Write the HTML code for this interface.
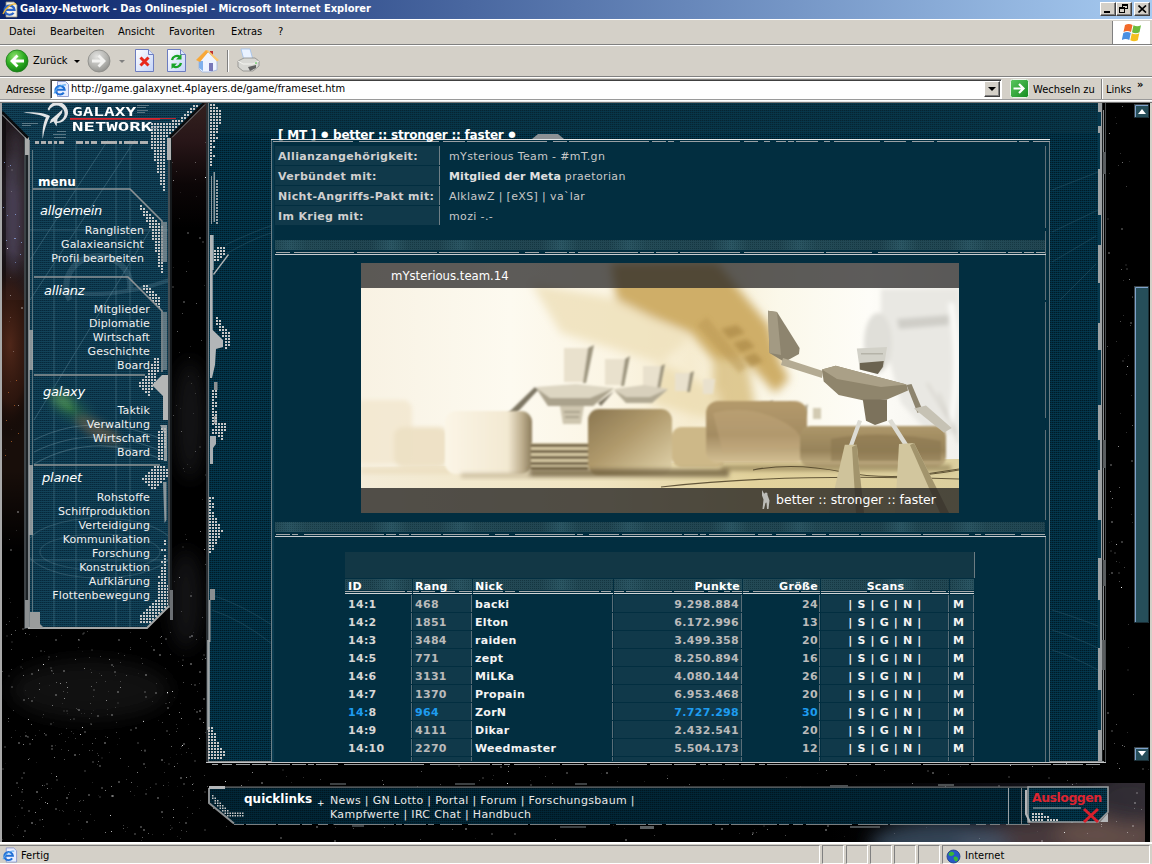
<!DOCTYPE html>
<html lang="de">
<head>
<meta charset="utf-8">
<title>Galaxy-Network - Das Onlinespiel</title>
<style>
html,body{margin:0;padding:0;}
body{width:1152px;height:864px;overflow:hidden;position:relative;background:#d4d0c8;font-family:"DejaVu Sans Condensed","Liberation Sans",sans-serif;font-size:11px;color:#000;}
.abs{position:absolute;}
/* ---------- browser chrome ---------- */
#titlebar{position:absolute;left:0;top:0;width:1152px;height:19px;background:linear-gradient(90deg,#0a246a 0%,#a6caf0 100%);}
#titletext{position:absolute;left:20px;top:1px;color:#fff;font-weight:bold;font-size:11px;line-height:16px;white-space:nowrap;font-family:"DejaVu Sans Condensed","Liberation Sans",sans-serif;letter-spacing:.025px;}
.tbtn{position:absolute;top:2px;width:16px;height:14px;background:#d4d0c8;box-sizing:border-box;border:1px solid;border-color:#fff #404040 #404040 #fff;box-shadow:inset -1px -1px 0 #808080;}
#menubar{position:absolute;left:0;top:19px;width:1152px;height:25px;background:#d4d0c8;border-top:1px solid #fff;box-sizing:border-box;}
.menuitem{position:absolute;top:5px;font-size:11px;line-height:14px;white-space:nowrap;}
#toolbar{position:absolute;left:0;top:44px;width:1152px;height:32px;background:#d4d0c8;border-top:1px solid #808080;box-sizing:border-box;box-shadow:inset 0 1px 0 #fff;}
#addrbar{position:absolute;left:0;top:76px;width:1152px;height:25px;background:#d4d0c8;border-top:1px solid #808080;box-sizing:border-box;box-shadow:inset 0 1px 0 #fff;}
#addrinput{position:absolute;left:50px;top:2px;width:952px;height:20px;background:#fff;box-sizing:border-box;border:1px solid;border-color:#808080 #fff #fff #808080;box-shadow:inset 1px 1px 0 #404040;}
#statusbar{position:absolute;left:0;top:842px;width:1152px;height:22px;background:#d4d0c8;box-sizing:border-box;box-shadow:inset 0 2px 0 #fff;}
.spane{position:absolute;top:3px;height:19px;box-sizing:border-box;border:1px solid;border-color:#808080 #fff #fff #808080;}
/* ---------- page ---------- */
#page{position:absolute;left:0;top:0;width:1152px;height:864px;background:#000;overflow:hidden;clip-path:inset(103px 2px 22px 2px);color:#e6e6e6;font-family:"DejaVu Sans","Liberation Sans",sans-serif;font-size:11px;}
#page svg{position:absolute;left:0;top:0;}
#viewborder{position:absolute;left:0;top:101px;width:1152px;height:743px;box-sizing:border-box;border:2px solid;border-color:#404040 #d4d0c8 #d4d0c8 #a8a8a8;border-top:0;pointer-events:none;}
#viewtop{position:absolute;left:0;top:99px;width:1152px;height:4px;background:linear-gradient(#9a9a9a 0 1px,#fff 1px 2px,#e4e4e4 2px 3px,#747474 3px 4px);}
.v{font-family:"DejaVu Sans","Liberation Sans",sans-serif;}
</style>
</head>
<body>

<!-- ======= TITLE BAR ======= -->
<div id="titlebar">
  <svg class="abs" style="left:2px;top:1px" width="17" height="17" viewBox="0 0 17 17">
    <path d="M4 1h8l3 3v12H4z" fill="#f4f1e6" stroke="#8c8a7e" stroke-width=".8"/>
    <path d="M11.600 11.800A5 4.600 0 1 1 12.500 8.800H3.500" fill="none" stroke="#2a64c8" stroke-width="2.200"/>
    <path d="M1 13c2-6 9-11 13-10" fill="none" stroke="#e8b030" stroke-width="1.3"/>
  </svg>
  <div id="titletext">Galaxy-Network - Das Onlinespiel - Microsoft Internet Explorer</div>
  <div class="tbtn" style="left:1100px"><div class="abs" style="left:3px;top:8px;width:6px;height:2px;background:#000"></div></div>
  <div class="tbtn" style="left:1116px">
    <div class="abs" style="left:5px;top:1px;width:6px;height:5px;border:1px solid #000;border-top-width:2px;box-sizing:border-box"></div>
    <div class="abs" style="left:2px;top:4px;width:6px;height:6px;border:1px solid #000;border-top-width:2px;box-sizing:border-box;background:#d4d0c8"></div>
  </div>
  <div class="tbtn" style="left:1134px">
    <svg class="abs" style="left:3px;top:2px" width="9" height="8" viewBox="0 0 9 8"><path d="M0.5 0.5l7.5 7M8 0.5l-7.5 7" stroke="#000" stroke-width="1.7" fill="none"/></svg>
  </div>
</div>

<!-- ======= MENU BAR ======= -->
<div id="menubar">
  <span class="menuitem" style="left:9px">Datei</span>
  <span class="menuitem" style="left:50px">Bearbeiten</span>
  <span class="menuitem" style="left:118px">Ansicht</span>
  <span class="menuitem" style="left:169px">Favoriten</span>
  <span class="menuitem" style="left:231px">Extras</span>
  <span class="menuitem" style="left:278px">?</span>
  <div class="abs" style="left:1112px;top:1px;width:38px;height:23px;background:#fff;border-left:1px solid #808080;box-sizing:border-box;">
    <svg class="abs" style="left:9px;top:2px" width="22" height="19" viewBox="0 0 22 19">
      <path d="M3 2c2.5-1.2 5-1.2 7.5 0l-1.5 7c-2.500-1.200-5-1.200-7.500 0z" fill="#f26a2a"/>
      <path d="M11.500 2.300c2.500 1.200 5 1.200 7.500 0l-1.500 7c-2.500 1.200-5 1.200-7.500 0z" fill="#6cbb3c"/>
      <path d="M1.300 10c2.500-1.200 5-1.200 7.500 0l-1.500 7c-2.500-1.200-5-1.200-7.500 0z" fill="#4a90e2"/>
      <path d="M9.800 10.300c2.500 1.200 5 1.200 7.500 0l-1.500 7c-2.500 1.200-5 1.200-7.500 0z" fill="#f4c020"/>
    </svg>
  </div>
</div>

<!-- ======= TOOLBAR ======= -->
<div id="toolbar">
  <!-- back -->
  <svg class="abs" style="left:5px;top:4px" width="24" height="24" viewBox="0 0 24 24">
    <defs>
      <radialGradient id="gback" cx="40%" cy="30%" r="75%"><stop offset="0" stop-color="#8fe070"/><stop offset=".55" stop-color="#2fae22"/><stop offset="1" stop-color="#0f7a10"/></radialGradient>
      <radialGradient id="gfwd" cx="40%" cy="30%" r="75%"><stop offset="0" stop-color="#e2e2e0"/><stop offset=".6" stop-color="#b4b4b0"/><stop offset="1" stop-color="#8e8e8a"/></radialGradient>
    </defs>
    <circle cx="12" cy="12" r="11" fill="url(#gback)" stroke="#1c7a18" stroke-width=".8"/>
    <path d="M5 12l6.500-6.500 2 2L10.500 10.500H19v3h-8.500l3 3-2 2z" fill="#fff"/>
  </svg>
  <span class="abs" style="left:33px;top:9px;line-height:14px">Zurück</span>
  <div class="abs" style="left:74px;top:15px;width:0;height:0;border:3px solid transparent;border-top:3px solid #000;border-bottom:0"></div>
  <!-- forward -->
  <svg class="abs" style="left:87px;top:4px" width="24" height="24" viewBox="0 0 24 24">
    <circle cx="12" cy="12" r="11" fill="url(#gfwd)" stroke="#8a8a86" stroke-width=".8"/>
    <path d="M19 12l-6.500-6.500-2 2 3 3H5v3h8.500l-3 3 2 2z" fill="#f2f2f0"/>
  </svg>
  <div class="abs" style="left:119px;top:15px;width:0;height:0;border:3px solid transparent;border-top:3px solid #808080;border-bottom:0"></div>
  <!-- stop -->
  <svg class="abs" style="left:134px;top:3px" width="22" height="25" viewBox="0 0 22 25">
    <defs><linearGradient id="gpage" x1="0" y1="0" x2="1" y2="1"><stop offset="0" stop-color="#ffffff"/><stop offset="1" stop-color="#c4d4f8"/></linearGradient></defs>
    <path d="M1.500 1.500h13l5 5v17h-18z" fill="url(#gpage)" stroke="#6c7cc0" stroke-width="1"/>
    <path d="M14.500 1.500v5h5" fill="#dce6fc" stroke="#6c7cc0" stroke-width="1"/>
    <path d="M6.500 9.500l8 8M14.500 9.500l-8 8" stroke="#e8281c" stroke-width="3" fill="none"/>
  </svg>
  <!-- refresh -->
  <svg class="abs" style="left:166px;top:3px" width="22" height="25" viewBox="0 0 22 25">
    <path d="M1.500 1.500h13l5 5v17h-18z" fill="url(#gpage)" stroke="#6c7cc0" stroke-width="1"/>
    <path d="M14.500 1.500v5h5" fill="#dce6fc" stroke="#6c7cc0" stroke-width="1"/>
    <path d="M6 12a5 5 0 0 1 8-3" stroke="#18a428" stroke-width="2.400" fill="none"/>
    <path d="M15.500 6v5.500H10z" fill="#18a428"/>
    <path d="M15 15a5 5 0 0 1-8 3" stroke="#18a428" stroke-width="2.400" fill="none"/>
    <path d="M5.500 21v-5.500H11z" fill="#18a428"/>
  </svg>
  <!-- home -->
  <svg class="abs" style="left:195px;top:3px" width="26" height="25" viewBox="0 0 26 25">
    <path d="M15 3h3v5h-3z" fill="#c03030"/>
    <path d="M4 13l9-9 9 8v10l-7 2H7l-3-3z" fill="#eef4ff" stroke="#9fb4dc" stroke-width=".8"/>
    <path d="M4 13v7l4 3V13z" fill="#7fb0ec"/>
    <path d="M1 12L11 2l3 1L5 14z" fill="#f8a838"/>
    <path d="M11 2l3 1 10 9-2 1.500z" fill="#fbc870"/>
    <path d="M14 15h4v8h-4z" fill="#7878b8"/>
  </svg>
  <div class="abs" style="left:227px;top:5px;width:1px;height:22px;background:#808080;border-right:1px solid #fff"></div>
  <!-- print -->
  <svg class="abs" style="left:236px;top:3px" width="25" height="25" viewBox="0 0 25 25">
    <path d="M5 1h9l3 11H8z" fill="#eaf2ff" stroke="#9fc0ec" stroke-width=".8"/>
    <path d="M2 13l6-3h11l4 3v5l-6 5H7l-5-4z" fill="#d8d8d4" stroke="#8c8c88" stroke-width=".8"/>
    <path d="M2 13l5 3h10l6-3" fill="none" stroke="#f4f4f0" stroke-width="1"/>
    <path d="M12 19l8-2v3l-6 3z" fill="#606060"/>
    <circle cx="20" cy="15" r=".8" fill="#30c030"/>
  </svg>
</div>

<!-- ======= ADDRESS BAR ======= -->
<div id="addrbar">
  <span class="abs" style="left:6px;top:6px;line-height:14px">Adresse</span>
  <div id="addrinput">
    <svg class="abs" style="left:2px;top:1px" width="17" height="16" viewBox="0 0 17 16">
      <path d="M4.500 .5h8l3 3v12h-11z" fill="#e8eeff" stroke="#7c8cc8" stroke-width=".8"/>
      <path d="M10.800 11.600A4.600 4.300 0 1 1 11.600 8.800H3.500" fill="none" stroke="#1f6fd6" stroke-width="2.100"/>
      <path d="M1 12.500c2-5.500 8-9.500 12-8.500" fill="none" stroke="#58a8f0" stroke-width="1.100"/>
    </svg>
    <span class="abs" style="left:20px;top:2px;line-height:14px;white-space:nowrap">http://game.galaxynet.4players.de/game/frameset.htm</span>
    <div class="abs" style="right:1px;top:1px;width:16px;height:16px;background:#d4d0c8;box-sizing:border-box;border:1px solid;border-color:#fff #404040 #404040 #fff;box-shadow:inset -1px -1px 0 #808080">
      <div class="abs" style="left:3px;top:5px;width:0;height:0;border:4px solid transparent;border-top:4px solid #000;border-bottom:0"></div>
    </div>
  </div>
  <svg class="abs" style="left:1010px;top:2px" width="19" height="19" viewBox="0 0 19 19">
    <defs><linearGradient id="ggo" x1="0" y1="0" x2="1" y2="1"><stop offset="0" stop-color="#5cc860"/><stop offset="1" stop-color="#148c20"/></linearGradient></defs>
    <rect x=".5" y=".5" width="18" height="18" rx="2" fill="url(#ggo)" stroke="#e8f4e8" stroke-width="1"/>
    <path d="M3.500 9.500h9M9 5l4.500 4.500L9 14" stroke="#fff" stroke-width="2.200" fill="none"/>
  </svg>
  <span class="abs" style="left:1033px;top:6px;line-height:14px;white-space:nowrap">Wechseln zu</span>
  <div class="abs" style="left:1101px;top:2px;width:1px;height:20px;background:#808080;border-right:1px solid #fff"></div>
  <span class="abs" style="left:1106px;top:6px;line-height:14px">Links</span>
  <span class="abs" style="left:1137px;top:1px;line-height:14px;font-size:11px;font-weight:bold;letter-spacing:-1px">»</span>
</div>

<!-- ======= PAGE ======= -->

<style>
.mi{position:absolute;font-size:11px;line-height:14px;color:#f0f0f0;white-space:nowrap;letter-spacing:.12px;}
.mc{position:absolute;font-style:italic;font-size:13px;line-height:16px;color:#fff;white-space:nowrap;letter-spacing:-.2px;}
.lg{font-family:"DejaVu Sans Mono","Liberation Mono",monospace;font-weight:bold;font-size:12.5px;line-height:13px;color:#fff;letter-spacing:0;transform-origin:0 0;white-space:nowrap;}
.il{position:absolute;left:275px;width:165px;height:19px;background:#10394a;box-sizing:border-box;padding:4px 0 0 3px;font-weight:bold;color:#d0d0d0;white-space:nowrap;letter-spacing:.36px;line-height:13px;border-right:1px solid #6f7f86;}
.iv{position:absolute;left:441px;width:604px;height:19px;box-sizing:border-box;padding:4px 0 0 8px;color:#c8c8c8;white-space:nowrap;letter-spacing:.36px;line-height:13px;}
.iv b{color:#e0e0e0;letter-spacing:.1px;}
.th{position:absolute;height:14px;box-sizing:border-box;font-weight:bold;color:#fff;line-height:13px;padding:0 2px 0 3px;white-space:nowrap;letter-spacing:.3px;}
.td{position:absolute;height:17px;box-sizing:border-box;font-weight:bold;color:#bababa;line-height:13px;padding:3px 2px 0 3px;white-space:nowrap;letter-spacing:.3px;border-right:1px solid #5a6e78;word-spacing:.7px;}
.td.alt{background:#10394a;}
.td.w{color:#f4f4f4;}
.td.idc{color:#d6d6d6;}
.td.me,.mec{color:#1e9cf0;}
.bl{display:inline-block;width:9px;text-align:center;font-size:8.500px;vertical-align:1.500px;letter-spacing:0;}
.r{text-align:right;}.c{text-align:center;}.l{text-align:left;}
.ql{font-size:11px;line-height:14px;color:#e8e8e8;white-space:nowrap;letter-spacing:.32px;}
</style>

<div id="page">
<svg width="1152" height="864" viewBox="0 0 1152 864">

<defs>
  <pattern id="grid" width="2" height="2" patternUnits="userSpaceOnUse"><rect width="2" height="2" fill="#04384e"/><rect width="1" height="1" fill="#001a26"/><rect x="1" width="1" height="1" fill="#022c3c"/><rect y="1" width="1" height="1" fill="#03334a"/></pattern>
  <pattern id="grid3" width="3" height="3" patternUnits="userSpaceOnUse"><rect width="3" height="3" fill="#0d3f54"/><rect width="2" height="2" fill="#012a3b"/></pattern>
  <pattern id="band" width="2" height="2" patternUnits="userSpaceOnUse"><rect width="2" height="2" fill="#2b515d"/><rect width="1" height="1" fill="#12303a"/></pattern>
  <linearGradient id="bandg" x1="0" x2="170" y1="0" y2="0" gradientUnits="userSpaceOnUse" spreadMethod="repeat">
    <stop offset="0" stop-color="#193e4a"/><stop offset=".18" stop-color="#173a46"/><stop offset=".3" stop-color="#2c5d6c"/><stop offset=".4" stop-color="#1a404c"/><stop offset=".58" stop-color="#183c48"/><stop offset=".7" stop-color="#2a5968"/><stop offset=".8" stop-color="#1c4450"/><stop offset="1" stop-color="#193e4a"/>
  </linearGradient>
  <radialGradient id="neb1" cx="50%" cy="50%" r="50%"><stop offset="0" stop-color="#52281a" stop-opacity=".95"/><stop offset=".6" stop-color="#34180f" stop-opacity=".7"/><stop offset="1" stop-color="#000" stop-opacity="0"/></radialGradient>
  <linearGradient id="fadeb" x1="0" x2="0" y1="0" y2="1"><stop offset="0" stop-color="#000" stop-opacity="0"/><stop offset=".75" stop-color="#000" stop-opacity="1"/><stop offset="1" stop-color="#000" stop-opacity="1"/></linearGradient>
  <linearGradient id="nebfade" x1="0" x2="1" y1="0" y2="0"><stop offset="0" stop-color="#0a0a0e" stop-opacity="0"/><stop offset=".5" stop-color="#0e0e14" stop-opacity=".9"/><stop offset=".85" stop-color="#1a181e" stop-opacity="1"/><stop offset="1" stop-color="#2a2428" stop-opacity="1"/></linearGradient>
  <linearGradient id="gapg" x1="0" x2="0" y1="0" y2="1"><stop offset="0" stop-color="#33211f"/><stop offset=".3" stop-color="#281618"/><stop offset=".65" stop-color="#0c0607"/><stop offset="1" stop-color="#000"/></linearGradient>
  <linearGradient id="leftg" x1="0" x2="0" y1="0" y2="1"><stop offset="0" stop-color="#1a1418"/><stop offset=".25" stop-color="#30262c"/><stop offset=".6" stop-color="#2c2024"/><stop offset="1" stop-color="#2a1812"/></linearGradient>
  <filter id="nblur" x="-20%" y="-50%" width="140%" height="200%"><feGaussianBlur stdDeviation="9"/></filter>
  <filter id="nblur2" x="-100%" y="-30%" width="300%" height="160%"><feGaussianBlur stdDeviation="4"/></filter>
  <radialGradient id="neb2" cx="50%" cy="50%" r="50%"><stop offset="0" stop-color="#3a1c1a" stop-opacity=".9"/><stop offset="1" stop-color="#000" stop-opacity="0"/></radialGradient>
  <radialGradient id="neb3" cx="50%" cy="50%" r="50%"><stop offset="0" stop-color="#4a4048" stop-opacity=".9"/><stop offset=".5" stop-color="#2c2830" stop-opacity=".7"/><stop offset="1" stop-color="#000" stop-opacity="0"/></radialGradient>
  <radialGradient id="neb4" cx="50%" cy="50%" r="50%"><stop offset="0" stop-color="#4a6a90" stop-opacity=".55"/><stop offset="1" stop-color="#000" stop-opacity="0"/></radialGradient>
</defs>


<g id="bg">
  <rect x="0" y="0" width="1152" height="864" fill="#000"/>
  <!-- nebula left of menu -->
  <rect x="2" y="103" width="26" height="330" fill="url(#leftg)"/>
  <g filter="url(#nblur2)"><ellipse cx="13" cy="215" rx="8" ry="62" fill="#4c465c" opacity=".8"/><ellipse cx="16" cy="160" rx="6" ry="30" fill="#3a3440" opacity=".7"/></g>
  <rect x="2" y="103" width="4" height="330" fill="#000" opacity=".45"/>
  <g fill="#8aa0d8" opacity=".8"><rect x="10" y="165" width="1" height="1"/><rect x="4" y="162" width="1" height="1"/><rect x="7" y="215" width="1" height="1"/><rect x="15" y="214" width="1" height="1"/><rect x="19" y="226" width="1" height="1"/><rect x="14" y="238" width="2" height="1"/><rect x="6" y="240" width="1" height="1"/><rect x="21" y="242" width="1" height="1"/><rect x="15" y="262" width="1" height="1"/><rect x="20" y="254" width="1" height="1"/><rect x="3" y="207" width="1" height="1"/></g>
  <rect x="2" y="300" width="26" height="280" fill="#180e0a"/>
  <ellipse cx="10" cy="345" rx="30" ry="95" fill="url(#neb1)"/>
  <rect x="2" y="470" width="26" height="110" fill="url(#fadeb)"/>
  <g fill="#e07830" opacity=".6"><rect x="8" y="392" width="1" height="1"/><rect x="14" y="405" width="1" height="1"/><rect x="6" y="420" width="1" height="1"/><rect x="18" y="433" width="1" height="1"/><rect x="11" y="441" width="1" height="1"/><rect x="16" y="380" width="1" height="1"/><rect x="5" y="455" width="1" height="1"/></g>
  <!-- faint haze in gap -->
  <g filter="url(#nblur)" opacity=".5"><ellipse cx="190" cy="420" rx="14" ry="60" fill="#2a2a2e"/><ellipse cx="186" cy="600" rx="16" ry="50" fill="#26262a"/><ellipse cx="90" cy="690" rx="80" ry="30" fill="#202024"/></g>
  <!-- nebula between menu and main -->
  <rect x="170" y="103" width="36" height="125" fill="url(#gapg)"/>
  <!-- nebula bottom right -->
  <g>
    <clipPath id="nebclip"><rect x="830" y="783" width="315" height="60"/></clipPath>
    <g clip-path="url(#nebclip)">
      <rect x="830" y="783" width="315" height="60" fill="url(#nebfade)"/>
      <g filter="url(#nblur)">
        <ellipse cx="1075" cy="842" rx="120" ry="26" fill="#4c3e40" opacity=".9"/>
        <ellipse cx="1105" cy="832" rx="50" ry="18" fill="#6a544e" opacity=".8"/>
        <ellipse cx="940" cy="845" rx="70" ry="24" fill="#41566e" opacity=".75"/>
        <ellipse cx="1130" cy="800" rx="36" ry="26" fill="#34303a" opacity=".8"/>
        
      </g>
    </g>
  </g>
  <rect x="51" y="745" width="2" height="2" fill="#fff" opacity="0.21"/><rect x="120" y="758" width="1" height="1" fill="#fff" opacity="0.42"/><rect x="114" y="671" width="2" height="2" fill="#fff" opacity="0.20"/><rect x="99" y="765" width="2" height="2" fill="#fff" opacity="0.22"/><rect x="82" y="633" width="2" height="2" fill="#fff" opacity="0.12"/><rect x="11" y="795" width="1" height="1" fill="#fff" opacity="0.37"/><rect x="123" y="825" width="1" height="1" fill="#fff" opacity="0.25"/><rect x="83" y="800" width="1" height="1" fill="#fff" opacity="0.29"/><rect x="22" y="659" width="1" height="1" fill="#fff" opacity="0.29"/><rect x="161" y="811" width="2" height="2" fill="#fff" opacity="0.26"/><rect x="74" y="754" width="2" height="2" fill="#fff" opacity="0.28"/><rect x="189" y="636" width="2" height="2" fill="#fff" opacity="0.21"/><rect x="35" y="812" width="1" height="1" fill="#fff" opacity="0.53"/><rect x="118" y="781" width="2" height="2" fill="#fff" opacity="0.26"/><rect x="56" y="656" width="1" height="1" fill="#fff" opacity="0.22"/><rect x="20" y="800" width="1" height="1" fill="#fff" opacity="0.11"/><rect x="89" y="718" width="1" height="1" fill="#fff" opacity="0.21"/><rect x="79" y="754" width="1" height="1" fill="#fff" opacity="0.28"/><rect x="105" y="842" width="2" height="2" fill="#fff" opacity="0.10"/><rect x="111" y="831" width="1" height="1" fill="#fff" opacity="0.70"/><rect x="56" y="776" width="1" height="1" fill="#fff" opacity="0.72"/><rect x="75" y="659" width="1" height="1" fill="#fff" opacity="0.39"/><rect x="179" y="712" width="1" height="1" fill="#fff" opacity="0.47"/><rect x="23" y="836" width="1" height="1" fill="#fff" opacity="0.37"/><rect x="131" y="782" width="1" height="1" fill="#fff" opacity="0.41"/><rect x="55" y="694" width="2" height="2" fill="#fff" opacity="0.25"/><rect x="66" y="710" width="2" height="2" fill="#fff" opacity="0.11"/><rect x="130" y="729" width="2" height="2" fill="#fff" opacity="0.16"/><rect x="59" y="734" width="1" height="1" fill="#fff" opacity="0.29"/><rect x="199" y="683" width="1" height="1" fill="#fff" opacity="0.21"/><rect x="38" y="669" width="1" height="1" fill="#fff" opacity="0.27"/><rect x="63" y="710" width="2" height="2" fill="#fff" opacity="0.09"/><rect x="141" y="658" width="1" height="1" fill="#fff" opacity="0.22"/><rect x="51" y="670" width="1" height="1" fill="#fff" opacity="0.23"/><rect x="125" y="831" width="1" height="1" fill="#fff" opacity="0.13"/><rect x="18" y="787" width="1" height="1" fill="#fff" opacity="0.21"/><rect x="48" y="656" width="2" height="2" fill="#fff" opacity="0.12"/><rect x="39" y="689" width="1" height="1" fill="#fff" opacity="0.46"/><rect x="166" y="703" width="1" height="1" fill="#fff" opacity="0.14"/><rect x="97" y="764" width="1" height="1" fill="#fff" opacity="0.21"/><rect x="190" y="663" width="2" height="2" fill="#fff" opacity="0.29"/><rect x="203" y="722" width="1" height="1" fill="#fff" opacity="0.53"/><rect x="47" y="788" width="1" height="1" fill="#fff" opacity="0.47"/><rect x="108" y="691" width="1" height="1" fill="#fff" opacity="0.13"/><rect x="177" y="836" width="1" height="1" fill="#fff" opacity="0.13"/><rect x="186" y="777" width="1" height="1" fill="#fff" opacity="0.52"/><rect x="186" y="752" width="1" height="1" fill="#fff" opacity="0.24"/><rect x="105" y="681" width="1" height="1" fill="#fff" opacity="0.20"/><rect x="194" y="760" width="2" height="2" fill="#fff" opacity="0.14"/><rect x="99" y="796" width="2" height="2" fill="#fff" opacity="0.12"/><rect x="183" y="655" width="1" height="1" fill="#fff" opacity="0.14"/><rect x="170" y="632" width="1" height="1" fill="#fff" opacity="0.27"/><rect x="156" y="683" width="1" height="1" fill="#fff" opacity="0.19"/><rect x="98" y="795" width="1" height="1" fill="#fff" opacity="0.09"/><rect x="11" y="641" width="2" height="2" fill="#fff" opacity="0.09"/><rect x="20" y="736" width="1" height="1" fill="#fff" opacity="0.15"/><rect x="81" y="713" width="1" height="1" fill="#fff" opacity="0.14"/><rect x="89" y="657" width="1" height="1" fill="#fff" opacity="0.24"/><rect x="118" y="639" width="2" height="2" fill="#fff" opacity="0.22"/><rect x="80" y="800" width="1" height="1" fill="#fff" opacity="0.17"/><rect x="130" y="791" width="1" height="1" fill="#fff" opacity="0.29"/><rect x="96" y="682" width="1" height="1" fill="#fff" opacity="0.23"/><rect x="166" y="678" width="1" height="1" fill="#fff" opacity="0.09"/><rect x="78" y="820" width="1" height="1" fill="#fff" opacity="0.14"/><rect x="143" y="829" width="2" height="2" fill="#fff" opacity="0.27"/><rect x="164" y="772" width="1" height="1" fill="#fff" opacity="0.20"/><rect x="168" y="782" width="1" height="1" fill="#fff" opacity="0.13"/><rect x="11" y="649" width="1" height="1" fill="#fff" opacity="0.27"/><rect x="169" y="702" width="1" height="1" fill="#fff" opacity="0.31"/><rect x="25" y="732" width="1" height="1" fill="#fff" opacity="0.14"/><rect x="165" y="638" width="2" height="2" fill="#fff" opacity="0.19"/><rect x="51" y="748" width="2" height="2" fill="#fff" opacity="0.20"/><rect x="68" y="750" width="1" height="1" fill="#fff" opacity="0.36"/><rect x="39" y="683" width="1" height="1" fill="#fff" opacity="0.25"/><rect x="54" y="757" width="1" height="1" fill="#fff" opacity="0.44"/><rect x="199" y="710" width="2" height="2" fill="#fff" opacity="0.28"/><rect x="199" y="718" width="2" height="2" fill="#fff" opacity="0.21"/><rect x="142" y="663" width="1" height="1" fill="#fff" opacity="0.28"/><rect x="22" y="789" width="1" height="1" fill="#fff" opacity="0.43"/><rect x="92" y="782" width="1" height="1" fill="#fff" opacity="0.14"/><rect x="32" y="739" width="1" height="1" fill="#fff" opacity="0.51"/><rect x="112" y="795" width="2" height="2" fill="#fff" opacity="0.27"/><rect x="176" y="754" width="1" height="1" fill="#fff" opacity="0.13"/><rect x="57" y="800" width="1" height="1" fill="#fff" opacity="0.21"/><rect x="68" y="794" width="1" height="1" fill="#fff" opacity="0.30"/><rect x="145" y="674" width="2" height="2" fill="#fff" opacity="0.28"/><rect x="116" y="732" width="1" height="1" fill="#fff" opacity="0.27"/><rect x="162" y="817" width="1" height="1" fill="#fff" opacity="0.28"/><rect x="134" y="795" width="1" height="1" fill="#fff" opacity="0.13"/><rect x="51" y="670" width="2" height="2" fill="#fff" opacity="0.12"/><rect x="140" y="638" width="1" height="1" fill="#fff" opacity="0.34"/><rect x="11" y="669" width="1" height="1" fill="#fff" opacity="0.26"/><rect x="21" y="807" width="2" height="2" fill="#fff" opacity="0.16"/><rect x="152" y="701" width="1" height="1" fill="#fff" opacity="0.15"/><rect x="101" y="675" width="1" height="1" fill="#fff" opacity="0.29"/><rect x="28" y="698" width="1" height="1" fill="#fff" opacity="0.32"/><rect x="90" y="723" width="2" height="2" fill="#fff" opacity="0.14"/><rect x="194" y="709" width="1" height="1" fill="#fff" opacity="0.25"/><rect x="137" y="772" width="1" height="1" fill="#fff" opacity="0.50"/><rect x="24" y="830" width="2" height="2" fill="#fff" opacity="0.20"/><rect x="25" y="735" width="2" height="2" fill="#fff" opacity="0.24"/><rect x="150" y="787" width="1" height="1" fill="#fff" opacity="0.24"/><rect x="39" y="819" width="2" height="2" fill="#fff" opacity="0.11"/><rect x="31" y="700" width="2" height="2" fill="#fff" opacity="0.21"/><rect x="63" y="670" width="2" height="2" fill="#fff" opacity="0.25"/><rect x="16" y="782" width="2" height="2" fill="#fff" opacity="0.20"/><rect x="82" y="651" width="1" height="1" fill="#fff" opacity="0.09"/><rect x="11" y="737" width="1" height="1" fill="#fff" opacity="0.25"/><rect x="181" y="830" width="1" height="1" fill="#fff" opacity="0.26"/><rect x="74" y="810" width="1" height="1" fill="#fff" opacity="0.14"/><rect x="141" y="750" width="1" height="1" fill="#fff" opacity="0.33"/><rect x="144" y="750" width="2" height="2" fill="#fff" opacity="0.17"/><rect x="28" y="759" width="1" height="1" fill="#fff" opacity="0.50"/><rect x="113" y="666" width="1" height="1" fill="#fff" opacity="0.27"/><rect x="161" y="636" width="1" height="1" fill="#fff" opacity="0.52"/><rect x="196" y="711" width="2" height="2" fill="#fff" opacity="0.21"/><rect x="104" y="742" width="2" height="2" fill="#fff" opacity="0.28"/><rect x="101" y="757" width="2" height="2" fill="#fff" opacity="0.08"/><rect x="50" y="667" width="2" height="2" fill="#fff" opacity="0.12"/><rect x="45" y="802" width="1" height="1" fill="#fff" opacity="0.54"/><rect x="25" y="690" width="1" height="1" fill="#fff" opacity="0.11"/><rect x="164" y="762" width="1" height="1" fill="#fff" opacity="0.16"/><rect x="105" y="736" width="1" height="1" fill="#fff" opacity="0.15"/><rect x="180" y="777" width="2" height="2" fill="#fff" opacity="0.27"/><rect x="160" y="637" width="1" height="1" fill="#fff" opacity="0.30"/><rect x="192" y="813" width="1" height="1" fill="#fff" opacity="0.25"/><rect x="66" y="797" width="2" height="2" fill="#fff" opacity="0.27"/><rect x="35" y="735" width="1" height="1" fill="#fff" opacity="0.20"/><rect x="45" y="734" width="2" height="2" fill="#fff" opacity="0.18"/><rect x="84" y="668" width="1" height="1" fill="#fff" opacity="0.48"/><rect x="77" y="709" width="1" height="1" fill="#fff" opacity="0.21"/><rect x="200" y="800" width="1" height="1" fill="#fff" opacity="0.16"/><rect x="111" y="664" width="2" height="2" fill="#fff" opacity="0.21"/><rect x="36" y="636" width="1" height="1" fill="#fff" opacity="0.12"/><rect x="40" y="808" width="1" height="1" fill="#fff" opacity="0.15"/><rect x="146" y="641" width="1" height="1" fill="#fff" opacity="0.17"/><rect x="187" y="817" width="1" height="1" fill="#fff" opacity="0.17"/><rect x="36" y="762" width="1" height="1" fill="#fff" opacity="0.11"/><rect x="167" y="692" width="1" height="1" fill="#fff" opacity="0.93"/><rect x="163" y="834" width="1" height="1" fill="#fff" opacity="0.20"/><rect x="168" y="763" width="2" height="2" fill="#fff" opacity="0.10"/><rect x="91" y="649" width="2" height="2" fill="#fff" opacity="0.10"/><rect x="20" y="666" width="2" height="2" fill="#fff" opacity="0.09"/><rect x="106" y="700" width="1" height="1" fill="#fff" opacity="0.49"/><rect x="71" y="731" width="1" height="1" fill="#fff" opacity="0.22"/><rect x="64" y="759" width="1" height="1" fill="#fff" opacity="0.32"/><rect x="62" y="810" width="1" height="1" fill="#fff" opacity="0.17"/><rect x="111" y="795" width="2" height="2" fill="#fff" opacity="0.26"/><rect x="81" y="829" width="1" height="1" fill="#fff" opacity="0.12"/><rect x="91" y="724" width="1" height="1" fill="#fff" opacity="0.16"/><rect x="105" y="790" width="1" height="1" fill="#fff" opacity="0.47"/><rect x="196" y="639" width="1" height="1" fill="#fff" opacity="0.25"/><rect x="21" y="777" width="2" height="2" fill="#fff" opacity="0.15"/><rect x="174" y="766" width="1" height="1" fill="#fff" opacity="0.52"/><rect x="94" y="820" width="1" height="1" fill="#fff" opacity="0.15"/><rect x="2" y="671" width="1" height="1" fill="#fff" opacity="0.28"/><rect x="118" y="653" width="1" height="1" fill="#fff" opacity="0.22"/><rect x="142" y="837" width="1" height="1" fill="#fff" opacity="0.34"/><rect x="203" y="654" width="2" height="2" fill="#fff" opacity="0.13"/><rect x="107" y="737" width="1" height="1" fill="#fff" opacity="0.38"/><rect x="182" y="796" width="1" height="1" fill="#fff" opacity="0.22"/><rect x="170" y="654" width="1" height="1" fill="#fff" opacity="0.29"/><rect x="194" y="684" width="2" height="2" fill="#fff" opacity="0.17"/><rect x="128" y="766" width="1" height="1" fill="#fff" opacity="0.27"/><rect x="84" y="770" width="2" height="2" fill="#fff" opacity="0.14"/><rect x="93" y="710" width="1" height="1" fill="#fff" opacity="0.08"/><rect x="151" y="646" width="1" height="1" fill="#fff" opacity="0.19"/><rect x="190" y="776" width="1" height="1" fill="#fff" opacity="0.25"/><rect x="126" y="675" width="1" height="1" fill="#fff" opacity="0.30"/><rect x="50" y="723" width="2" height="2" fill="#fff" opacity="0.15"/><rect x="192" y="784" width="1" height="1" fill="#fff" opacity="0.55"/><rect x="127" y="827" width="1" height="1" fill="#fff" opacity="0.17"/><rect x="186" y="831" width="1" height="1" fill="#fff" opacity="0.25"/><rect x="98" y="755" width="1" height="1" fill="#fff" opacity="0.29"/><rect x="40" y="650" width="2" height="2" fill="#fff" opacity="0.14"/><rect x="15" y="730" width="1" height="1" fill="#fff" opacity="0.13"/><rect x="90" y="703" width="1" height="1" fill="#fff" opacity="0.24"/><rect x="31" y="724" width="1" height="1" fill="#fff" opacity="0.41"/><rect x="44" y="733" width="1" height="1" fill="#fff" opacity="0.37"/><rect x="79" y="801" width="1" height="1" fill="#fff" opacity="0.29"/><rect x="66" y="728" width="1" height="1" fill="#fff" opacity="0.20"/><rect x="197" y="691" width="1" height="1" fill="#fff" opacity="0.16"/><rect x="167" y="693" width="1" height="1" fill="#fff" opacity="0.26"/><rect x="5" y="763" width="1" height="1" fill="#fff" opacity="0.08"/><rect x="2" y="839" width="1" height="1" fill="#fff" opacity="0.16"/><rect x="202" y="637" width="1" height="1" fill="#fff" opacity="0.08"/><rect x="187" y="807" width="1" height="1" fill="#fff" opacity="0.26"/><rect x="66" y="682" width="1" height="1" fill="#fff" opacity="0.40"/><rect x="55" y="639" width="2" height="2" fill="#fff" opacity="0.22"/><rect x="36" y="791" width="2" height="2" fill="#fff" opacity="0.29"/><rect x="157" y="797" width="2" height="2" fill="#fff" opacity="0.26"/><rect x="29" y="634" width="1" height="1" fill="#fff" opacity="0.19"/><rect x="185" y="822" width="2" height="2" fill="#fff" opacity="0.23"/><rect x="107" y="709" width="1" height="1" fill="#fff" opacity="0.14"/><rect x="141" y="840" width="1" height="1" fill="#fff" opacity="0.17"/><rect x="93" y="689" width="2" height="2" fill="#fff" opacity="0.14"/><rect x="34" y="697" width="1" height="1" fill="#fff" opacity="0.17"/><rect x="171" y="827" width="2" height="2" fill="#fff" opacity="0.09"/><rect x="124" y="655" width="1" height="1" fill="#fff" opacity="0.25"/><rect x="23" y="772" width="2" height="2" fill="#fff" opacity="0.19"/><rect x="93" y="696" width="1" height="1" fill="#fff" opacity="0.22"/><rect x="67" y="687" width="1" height="1" fill="#fff" opacity="0.54"/><rect x="67" y="713" width="1" height="1" fill="#fff" opacity="0.11"/><rect x="86" y="821" width="2" height="2" fill="#fff" opacity="0.29"/><rect x="18" y="742" width="2" height="2" fill="#fff" opacity="0.26"/><rect x="173" y="817" width="1" height="1" fill="#fff" opacity="0.54"/><rect x="143" y="721" width="1" height="1" fill="#fff" opacity="0.76"/><rect x="61" y="749" width="1" height="1" fill="#fff" opacity="0.19"/><rect x="31" y="822" width="2" height="2" fill="#fff" opacity="0.30"/><rect x="83" y="632" width="2" height="2" fill="#fff" opacity="0.12"/><rect x="38" y="670" width="1" height="1" fill="#fff" opacity="0.52"/><rect x="12" y="834" width="1" height="1" fill="#fff" opacity="0.16"/><rect x="90" y="669" width="1" height="1" fill="#fff" opacity="0.10"/><rect x="32" y="657" width="1" height="1" fill="#fff" opacity="0.28"/><rect x="193" y="632" width="1" height="1" fill="#fff" opacity="0.11"/><rect x="52" y="705" width="1" height="1" fill="#fff" opacity="0.42"/><rect x="145" y="696" width="2" height="2" fill="#fff" opacity="0.16"/><rect x="176" y="724" width="1" height="1" fill="#fff" opacity="0.20"/><rect x="92" y="743" width="1" height="1" fill="#fff" opacity="0.35"/><rect x="123" y="828" width="1" height="1" fill="#fff" opacity="0.34"/><rect x="199" y="808" width="1" height="1" fill="#fff" opacity="0.14"/><rect x="29" y="758" width="1" height="1" fill="#fff" opacity="0.22"/><rect x="25" y="633" width="1" height="1" fill="#fff" opacity="0.50"/><rect x="204" y="775" width="1" height="1" fill="#fff" opacity="0.25"/><rect x="97" y="753" width="1" height="1" fill="#fff" opacity="0.21"/><rect x="68" y="737" width="1" height="1" fill="#fff" opacity="0.15"/><rect x="145" y="793" width="2" height="2" fill="#fff" opacity="0.16"/><rect x="172" y="691" width="1" height="1" fill="#fff" opacity="0.69"/><rect x="27" y="736" width="2" height="2" fill="#fff" opacity="0.16"/><rect x="53" y="722" width="1" height="1" fill="#fff" opacity="0.11"/><rect x="110" y="815" width="1" height="1" fill="#fff" opacity="0.78"/><rect x="92" y="761" width="2" height="2" fill="#fff" opacity="0.17"/><rect x="161" y="643" width="1" height="1" fill="#fff" opacity="0.40"/><rect x="202" y="708" width="1" height="1" fill="#fff" opacity="0.20"/><rect x="90" y="814" width="1" height="1" fill="#fff" opacity="0.16"/><rect x="78" y="709" width="2" height="2" fill="#fff" opacity="0.28"/><rect x="181" y="754" width="1" height="1" fill="#fff" opacity="0.13"/><rect x="15" y="630" width="1" height="1" fill="#fff" opacity="0.35"/><rect x="91" y="672" width="1" height="1" fill="#fff" opacity="0.24"/><rect x="111" y="786" width="1" height="1" fill="#fff" opacity="0.51"/><rect x="188" y="724" width="1" height="1" fill="#fff" opacity="0.11"/><rect x="48" y="659" width="1" height="1" fill="#fff" opacity="0.20"/><rect x="170" y="757" width="1" height="1" fill="#fff" opacity="0.09"/><rect x="80" y="734" width="1" height="1" fill="#fff" opacity="0.77"/><rect x="31" y="673" width="2" height="2" fill="#fff" opacity="0.21"/><rect x="63" y="691" width="1" height="1" fill="#fff" opacity="0.24"/><rect x="15" y="816" width="1" height="1" fill="#fff" opacity="0.15"/><rect x="68" y="823" width="2" height="2" fill="#fff" opacity="0.10"/><rect x="70" y="719" width="1" height="1" fill="#fff" opacity="0.27"/><rect x="134" y="833" width="2" height="2" fill="#fff" opacity="0.19"/><rect x="109" y="752" width="1" height="1" fill="#fff" opacity="0.13"/><rect x="170" y="825" width="1" height="1" fill="#fff" opacity="0.16"/><rect x="137" y="742" width="2" height="2" fill="#fff" opacity="0.15"/><rect x="29" y="743" width="2" height="2" fill="#fff" opacity="0.16"/><rect x="177" y="786" width="1" height="1" fill="#fff" opacity="0.09"/><rect x="177" y="763" width="1" height="1" fill="#fff" opacity="0.27"/><rect x="170" y="829" width="1" height="1" fill="#fff" opacity="0.28"/><rect x="174" y="697" width="1" height="1" fill="#fff" opacity="0.15"/><rect x="80" y="811" width="1" height="1" fill="#fff" opacity="0.31"/><rect x="84" y="713" width="1" height="1" fill="#fff" opacity="0.14"/><rect x="13" y="835" width="1" height="1" fill="#fff" opacity="0.13"/><rect x="92" y="750" width="1" height="1" fill="#fff" opacity="0.23"/><rect x="167" y="707" width="2" height="2" fill="#fff" opacity="0.23"/><rect x="82" y="744" width="1" height="1" fill="#fff" opacity="0.22"/><rect x="78" y="647" width="1" height="1" fill="#fff" opacity="0.18"/><rect x="120" y="687" width="1" height="1" fill="#fff" opacity="0.47"/><rect x="47" y="803" width="1" height="1" fill="#fff" opacity="0.72"/><rect x="205" y="732" width="1" height="1" fill="#fff" opacity="0.24"/><rect x="178" y="661" width="1" height="1" fill="#fff" opacity="0.16"/><rect x="176" y="731" width="1" height="1" fill="#fff" opacity="0.27"/><rect x="78" y="639" width="2" height="2" fill="#fff" opacity="0.22"/><rect x="21" y="791" width="2" height="2" fill="#fff" opacity="0.15"/><rect x="182" y="745" width="1" height="1" fill="#fff" opacity="0.89"/><rect x="155" y="692" width="2" height="2" fill="#fff" opacity="0.23"/><rect x="158" y="720" width="1" height="1" fill="#fff" opacity="0.12"/><rect x="144" y="749" width="2" height="2" fill="#fff" opacity="0.10"/><rect x="35" y="824" width="1" height="1" fill="#fff" opacity="0.20"/><rect x="42" y="717" width="1" height="1" fill="#fff" opacity="0.10"/><rect x="126" y="779" width="1" height="1" fill="#fff" opacity="0.23"/><rect x="23" y="744" width="1" height="1" fill="#fff" opacity="0.52"/><rect x="107" y="714" width="1" height="1" fill="#fff" opacity="0.14"/><rect x="49" y="685" width="1" height="1" fill="#fff" opacity="0.10"/><rect x="91" y="686" width="1" height="1" fill="#fff" opacity="0.35"/><rect x="119" y="738" width="1" height="1" fill="#fff" opacity="0.13"/><rect x="163" y="785" width="1" height="1" fill="#fff" opacity="0.32"/><rect x="146" y="789" width="1" height="1" fill="#fff" opacity="0.18"/><rect x="69" y="792" width="1" height="1" fill="#fff" opacity="0.23"/><rect x="205" y="658" width="1" height="1" fill="#fff" opacity="0.41"/><rect x="89" y="750" width="1" height="1" fill="#fff" opacity="0.30"/><rect x="55" y="745" width="1" height="1" fill="#fff" opacity="0.17"/><rect x="8" y="721" width="1" height="1" fill="#fff" opacity="0.25"/><rect x="105" y="832" width="1" height="1" fill="#fff" opacity="0.48"/><rect x="78" y="639" width="1" height="1" fill="#fff" opacity="0.24"/><rect x="43" y="664" width="1" height="1" fill="#fff" opacity="0.86"/><rect x="101" y="787" width="2" height="2" fill="#fff" opacity="0.20"/><rect x="168" y="785" width="1" height="1" fill="#fff" opacity="0.10"/><rect x="182" y="659" width="2" height="2" fill="#fff" opacity="0.10"/><rect x="82" y="727" width="1" height="1" fill="#fff" opacity="0.81"/><rect x="56" y="779" width="2" height="2" fill="#fff" opacity="0.14"/><rect x="87" y="631" width="1" height="1" fill="#fff" opacity="0.24"/><rect x="23" y="800" width="1" height="1" fill="#fff" opacity="0.26"/><rect x="193" y="783" width="1" height="1" fill="#fff" opacity="0.18"/><rect x="165" y="703" width="1" height="1" fill="#fff" opacity="0.17"/><rect x="83" y="838" width="1" height="1" fill="#fff" opacity="0.23"/><rect x="61" y="635" width="1" height="1" fill="#fff" opacity="0.15"/><rect x="95" y="738" width="1" height="1" fill="#fff" opacity="0.30"/><rect x="137" y="786" width="1" height="1" fill="#fff" opacity="0.17"/><rect x="165" y="668" width="1" height="1" fill="#fff" opacity="0.20"/><rect x="191" y="753" width="1" height="1" fill="#fff" opacity="0.18"/><rect x="65" y="741" width="1" height="1" fill="#fff" opacity="0.20"/><rect x="27" y="736" width="1" height="1" fill="#fff" opacity="0.13"/><rect x="6" y="635" width="2" height="2" fill="#fff" opacity="0.09"/><rect x="179" y="822" width="1" height="1" fill="#fff" opacity="0.23"/><rect x="169" y="734" width="1" height="1" fill="#fff" opacity="0.26"/><rect x="130" y="649" width="1" height="1" fill="#fff" opacity="0.31"/><rect x="199" y="671" width="2" height="2" fill="#fff" opacity="0.24"/><rect x="155" y="783" width="2" height="2" fill="#fff" opacity="0.12"/><rect x="63" y="811" width="1" height="1" fill="#fff" opacity="0.19"/><rect x="140" y="826" width="2" height="2" fill="#fff" opacity="0.24"/><rect x="162" y="722" width="1" height="1" fill="#fff" opacity="0.29"/><rect x="64" y="786" width="1" height="1" fill="#fff" opacity="0.18"/><rect x="44" y="651" width="1" height="1" fill="#fff" opacity="0.19"/><rect x="99" y="673" width="1" height="1" fill="#fff" opacity="0.09"/><rect x="206" y="640" width="1" height="1" fill="#fff" opacity="0.16"/><rect x="22" y="668" width="1" height="1" fill="#fff" opacity="0.14"/><rect x="117" y="702" width="2" height="2" fill="#fff" opacity="0.09"/><rect x="169" y="714" width="1" height="1" fill="#fff" opacity="0.40"/><rect x="109" y="659" width="1" height="1" fill="#fff" opacity="0.49"/><rect x="8" y="718" width="1" height="1" fill="#fff" opacity="0.45"/><rect x="84" y="731" width="2" height="2" fill="#fff" opacity="0.20"/><rect x="43" y="714" width="1" height="1" fill="#fff" opacity="0.24"/><rect x="42" y="819" width="1" height="1" fill="#fff" opacity="0.48"/><rect x="202" y="659" width="1" height="1" fill="#fff" opacity="0.28"/><rect x="23" y="675" width="1" height="1" fill="#fff" opacity="0.44"/><rect x="28" y="719" width="1" height="1" fill="#fff" opacity="0.66"/><rect x="143" y="763" width="2" height="2" fill="#fff" opacity="0.22"/><rect x="191" y="684" width="1" height="1" fill="#fff" opacity="0.29"/><rect x="115" y="675" width="1" height="1" fill="#fff" opacity="0.12"/><rect x="183" y="682" width="1" height="1" fill="#fff" opacity="0.29"/><rect x="153" y="649" width="2" height="2" fill="#fff" opacity="0.25"/><rect x="44" y="785" width="1" height="1" fill="#fff" opacity="0.22"/><rect x="193" y="790" width="1" height="1" fill="#fff" opacity="0.32"/><rect x="53" y="673" width="1" height="1" fill="#fff" opacity="0.29"/><rect x="188" y="748" width="1" height="1" fill="#fff" opacity="0.17"/><rect x="111" y="714" width="2" height="2" fill="#fff" opacity="0.26"/><rect x="43" y="826" width="1" height="1" fill="#fff" opacity="0.23"/><rect x="88" y="794" width="2" height="2" fill="#fff" opacity="0.25"/><rect x="51" y="788" width="1" height="1" fill="#fff" opacity="0.11"/><rect x="180" y="703" width="1" height="1" fill="#fff" opacity="0.15"/><rect x="161" y="759" width="2" height="2" fill="#fff" opacity="0.28"/><rect x="61" y="733" width="1" height="1" fill="#fff" opacity="0.18"/><rect x="100" y="656" width="1" height="1" fill="#fff" opacity="0.27"/><rect x="59" y="810" width="1" height="1" fill="#fff" opacity="0.18"/><rect x="76" y="708" width="1" height="1" fill="#fff" opacity="0.20"/><rect x="117" y="744" width="1" height="1" fill="#fff" opacity="0.10"/><rect x="40" y="838" width="1" height="1" fill="#fff" opacity="0.27"/><rect x="152" y="834" width="1" height="1" fill="#fff" opacity="0.16"/><rect x="173" y="809" width="1" height="1" fill="#fff" opacity="0.54"/><rect x="13" y="710" width="1" height="1" fill="#fff" opacity="0.25"/><rect x="73" y="733" width="1" height="1" fill="#fff" opacity="0.18"/><rect x="181" y="746" width="1" height="1" fill="#fff" opacity="0.28"/><rect x="138" y="673" width="1" height="1" fill="#fff" opacity="0.10"/><rect x="8" y="675" width="2" height="2" fill="#fff" opacity="0.09"/><rect x="183" y="783" width="2" height="2" fill="#fff" opacity="0.18"/><rect x="64" y="698" width="1" height="1" fill="#fff" opacity="0.51"/><rect x="145" y="767" width="1" height="1" fill="#fff" opacity="0.25"/><rect x="28" y="810" width="2" height="2" fill="#fff" opacity="0.19"/><rect x="98" y="761" width="1" height="1" fill="#fff" opacity="0.38"/><rect x="130" y="647" width="1" height="1" fill="#fff" opacity="0.20"/><rect x="91" y="713" width="1" height="1" fill="#fff" opacity="0.23"/><rect x="62" y="703" width="1" height="1" fill="#fff" opacity="0.12"/><rect x="17" y="827" width="1" height="1" fill="#fff" opacity="0.21"/><rect x="199" y="738" width="1" height="1" fill="#fff" opacity="0.53"/><rect x="130" y="632" width="1" height="1" fill="#fff" opacity="0.18"/><rect x="135" y="727" width="2" height="2" fill="#fff" opacity="0.21"/><rect x="183" y="743" width="2" height="2" fill="#fff" opacity="0.25"/><rect x="41" y="797" width="1" height="1" fill="#fff" opacity="0.27"/><rect x="168" y="796" width="1" height="1" fill="#fff" opacity="0.12"/><rect x="148" y="833" width="1" height="1" fill="#fff" opacity="0.37"/><rect x="204" y="829" width="2" height="2" fill="#fff" opacity="0.13"/><rect x="117" y="691" width="2" height="2" fill="#fff" opacity="0.26"/><rect x="23" y="699" width="2" height="2" fill="#fff" opacity="0.21"/><rect x="67" y="692" width="1" height="1" fill="#fff" opacity="0.21"/><rect x="65" y="839" width="1" height="1" fill="#fff" opacity="0.13"/><rect x="115" y="707" width="1" height="1" fill="#fff" opacity="0.16"/><rect x="39" y="730" width="1" height="1" fill="#fff" opacity="0.12"/><rect x="120" y="681" width="1" height="1" fill="#fff" opacity="0.22"/><rect x="4" y="746" width="2" height="2" fill="#fff" opacity="0.15"/><rect x="60" y="683" width="1" height="1" fill="#fff" opacity="0.50"/><rect x="120" y="662" width="1" height="1" fill="#fff" opacity="0.23"/><rect x="97" y="715" width="2" height="2" fill="#fff" opacity="0.22"/><rect x="18" y="825" width="1" height="1" fill="#fff" opacity="0.16"/><rect x="39" y="799" width="1" height="1" fill="#fff" opacity="0.24"/><rect x="143" y="720" width="1" height="1" fill="#fff" opacity="0.10"/><rect x="11" y="686" width="2" height="2" fill="#fff" opacity="0.17"/><rect x="73" y="718" width="2" height="2" fill="#fff" opacity="0.13"/><rect x="75" y="738" width="1" height="1" fill="#fff" opacity="0.26"/><rect x="144" y="691" width="2" height="2" fill="#fff" opacity="0.16"/><rect x="2" y="768" width="2" height="2" fill="#fff" opacity="0.12"/><rect x="180" y="838" width="1" height="1" fill="#fff" opacity="0.20"/><rect x="182" y="665" width="1" height="1" fill="#fff" opacity="0.51"/><rect x="204" y="791" width="2" height="2" fill="#fff" opacity="0.13"/><rect x="24" y="815" width="1" height="1" fill="#fff" opacity="0.16"/><rect x="55" y="808" width="2" height="2" fill="#fff" opacity="0.22"/><rect x="116" y="722" width="1" height="1" fill="#fff" opacity="0.19"/><rect x="203" y="698" width="2" height="2" fill="#fff" opacity="0.26"/><rect x="42" y="785" width="1" height="1" fill="#fff" opacity="0.46"/><rect x="46" y="783" width="2" height="2" fill="#fff" opacity="0.16"/><rect x="56" y="682" width="1" height="1" fill="#fff" opacity="0.33"/><rect x="154" y="739" width="1" height="1" fill="#fff" opacity="0.30"/><rect x="181" y="718" width="1" height="1" fill="#fff" opacity="0.54"/><rect x="171" y="746" width="1" height="1" fill="#fff" opacity="0.38"/><rect x="75" y="788" width="1" height="1" fill="#fff" opacity="0.28"/><rect x="166" y="730" width="2" height="2" fill="#fff" opacity="0.16"/><rect x="51" y="773" width="1" height="1" fill="#fff" opacity="0.25"/><rect x="19" y="804" width="1" height="1" fill="#fff" opacity="0.20"/><rect x="180" y="748" width="1" height="1" fill="#fff" opacity="0.11"/><rect x="66" y="803" width="1" height="1" fill="#fff" opacity="0.28"/><rect x="177" y="728" width="1" height="1" fill="#fff" opacity="0.23"/><rect x="159" y="654" width="2" height="2" fill="#fff" opacity="0.27"/>
  <rect x="180" y="192" width="1" height="1" fill="#fff" opacity="0.11"/><rect x="173" y="415" width="1" height="1" fill="#fff" opacity="0.30"/><rect x="180" y="408" width="1" height="1" fill="#fff" opacity="0.12"/><rect x="181" y="611" width="1" height="1" fill="#fff" opacity="0.22"/><rect x="199" y="237" width="2" height="2" fill="#fff" opacity="0.22"/><rect x="205" y="564" width="1" height="1" fill="#fff" opacity="0.27"/><rect x="195" y="393" width="1" height="1" fill="#fff" opacity="0.18"/><rect x="204" y="549" width="1" height="1" fill="#fff" opacity="0.51"/><rect x="172" y="286" width="2" height="2" fill="#fff" opacity="0.15"/><rect x="179" y="352" width="1" height="1" fill="#fff" opacity="0.18"/><rect x="182" y="546" width="2" height="2" fill="#fff" opacity="0.09"/><rect x="206" y="399" width="1" height="1" fill="#fff" opacity="0.23"/><rect x="206" y="238" width="2" height="2" fill="#fff" opacity="0.12"/><rect x="187" y="232" width="2" height="2" fill="#fff" opacity="0.21"/><rect x="191" y="592" width="1" height="1" fill="#fff" opacity="0.09"/><rect x="181" y="431" width="1" height="1" fill="#fff" opacity="0.33"/><rect x="204" y="285" width="1" height="1" fill="#fff" opacity="0.16"/><rect x="202" y="617" width="1" height="1" fill="#fff" opacity="0.29"/><rect x="183" y="301" width="2" height="2" fill="#fff" opacity="0.22"/><rect x="195" y="179" width="1" height="1" fill="#fff" opacity="0.28"/><rect x="177" y="331" width="1" height="1" fill="#fff" opacity="0.38"/><rect x="172" y="162" width="1" height="1" fill="#fff" opacity="0.25"/><rect x="206" y="426" width="1" height="1" fill="#fff" opacity="0.13"/><rect x="176" y="171" width="1" height="1" fill="#fff" opacity="0.21"/><rect x="193" y="413" width="1" height="1" fill="#fff" opacity="0.15"/><rect x="176" y="405" width="1" height="1" fill="#fff" opacity="0.17"/><rect x="188" y="261" width="1" height="1" fill="#fff" opacity="0.09"/><rect x="187" y="464" width="1" height="1" fill="#fff" opacity="0.13"/><rect x="173" y="267" width="1" height="1" fill="#fff" opacity="0.13"/><rect x="186" y="271" width="1" height="1" fill="#fff" opacity="0.28"/><rect x="191" y="635" width="2" height="2" fill="#fff" opacity="0.28"/><rect x="202" y="499" width="1" height="1" fill="#fff" opacity="0.17"/><rect x="179" y="577" width="1" height="1" fill="#fff" opacity="0.53"/><rect x="183" y="468" width="1" height="1" fill="#fff" opacity="0.22"/><rect x="190" y="467" width="1" height="1" fill="#fff" opacity="0.14"/><rect x="205" y="177" width="1" height="1" fill="#fff" opacity="0.94"/><rect x="195" y="162" width="1" height="1" fill="#fff" opacity="0.33"/><rect x="205" y="474" width="2" height="2" fill="#fff" opacity="0.12"/><rect x="188" y="376" width="1" height="1" fill="#fff" opacity="0.17"/><rect x="179" y="218" width="1" height="1" fill="#fff" opacity="0.14"/><rect x="200" y="531" width="1" height="1" fill="#fff" opacity="0.44"/><rect x="202" y="241" width="2" height="2" fill="#fff" opacity="0.15"/><rect x="198" y="376" width="1" height="1" fill="#fff" opacity="0.09"/><rect x="196" y="196" width="1" height="1" fill="#fff" opacity="0.14"/><rect x="173" y="180" width="1" height="1" fill="#fff" opacity="0.53"/><rect x="182" y="313" width="1" height="1" fill="#fff" opacity="0.29"/><rect x="185" y="534" width="1" height="1" fill="#fff" opacity="0.13"/><rect x="201" y="340" width="1" height="1" fill="#fff" opacity="0.28"/><rect x="189" y="357" width="1" height="1" fill="#fff" opacity="0.49"/><rect x="174" y="581" width="1" height="1" fill="#fff" opacity="0.15"/><rect x="186" y="539" width="1" height="1" fill="#fff" opacity="0.27"/><rect x="196" y="303" width="1" height="1" fill="#fff" opacity="0.36"/><rect x="205" y="142" width="1" height="1" fill="#fff" opacity="0.22"/><rect x="191" y="383" width="1" height="1" fill="#fff" opacity="0.19"/><rect x="190" y="346" width="1" height="1" fill="#fff" opacity="0.13"/><rect x="206" y="453" width="1" height="1" fill="#fff" opacity="0.21"/><rect x="190" y="595" width="2" height="2" fill="#fff" opacity="0.21"/><rect x="199" y="446" width="2" height="2" fill="#fff" opacity="0.11"/><rect x="184" y="471" width="1" height="1" fill="#fff" opacity="0.10"/><rect x="195" y="451" width="1" height="1" fill="#fff" opacity="0.29"/>
  <rect x="17" y="511" width="2" height="2" fill="#fff" opacity="0.29"/><rect x="18" y="405" width="1" height="1" fill="#fff" opacity="0.49"/><rect x="8" y="166" width="1" height="1" fill="#fff" opacity="0.16"/><rect x="11" y="191" width="1" height="1" fill="#fff" opacity="0.24"/><rect x="9" y="598" width="1" height="1" fill="#fff" opacity="0.12"/><rect x="5" y="449" width="1" height="1" fill="#fff" opacity="0.08"/><rect x="7" y="248" width="1" height="1" fill="#fff" opacity="0.91"/><rect x="9" y="621" width="1" height="1" fill="#fff" opacity="0.23"/><rect x="6" y="624" width="1" height="1" fill="#fff" opacity="0.29"/><rect x="9" y="321" width="1" height="1" fill="#fff" opacity="0.11"/><rect x="10" y="549" width="2" height="2" fill="#fff" opacity="0.21"/><rect x="10" y="295" width="1" height="1" fill="#fff" opacity="0.42"/><rect x="10" y="381" width="1" height="1" fill="#fff" opacity="0.09"/><rect x="25" y="319" width="1" height="1" fill="#fff" opacity="0.20"/><rect x="11" y="429" width="1" height="1" fill="#fff" opacity="0.09"/><rect x="17" y="617" width="1" height="1" fill="#fff" opacity="0.13"/><rect x="10" y="317" width="1" height="1" fill="#fff" opacity="0.25"/><rect x="16" y="530" width="1" height="1" fill="#fff" opacity="0.15"/><rect x="25" y="186" width="1" height="1" fill="#fff" opacity="0.21"/><rect x="10" y="602" width="1" height="1" fill="#fff" opacity="0.15"/><rect x="9" y="539" width="1" height="1" fill="#fff" opacity="0.24"/><rect x="26" y="221" width="2" height="2" fill="#fff" opacity="0.30"/><rect x="24" y="156" width="1" height="1" fill="#fff" opacity="0.16"/><rect x="13" y="351" width="1" height="1" fill="#fff" opacity="0.28"/><rect x="21" y="307" width="2" height="2" fill="#fff" opacity="0.30"/><rect x="25" y="455" width="1" height="1" fill="#fff" opacity="0.10"/><rect x="11" y="169" width="2" height="2" fill="#fff" opacity="0.11"/><rect x="22" y="628" width="2" height="2" fill="#fff" opacity="0.19"/><rect x="10" y="277" width="1" height="1" fill="#fff" opacity="0.28"/><rect x="11" y="634" width="1" height="1" fill="#fff" opacity="0.46"/>
  <rect x="1128" y="647" width="1" height="1" fill="#fff" opacity="0.14"/><rect x="1110" y="491" width="1" height="1" fill="#fff" opacity="0.48"/><rect x="1115" y="117" width="1" height="1" fill="#fff" opacity="0.12"/><rect x="1131" y="460" width="2" height="2" fill="#fff" opacity="0.20"/><rect x="1129" y="279" width="1" height="1" fill="#fff" opacity="0.47"/><rect x="1130" y="325" width="1" height="1" fill="#fff" opacity="0.26"/><rect x="1118" y="165" width="1" height="1" fill="#fff" opacity="0.22"/><rect x="1109" y="133" width="1" height="1" fill="#fff" opacity="0.51"/><rect x="1132" y="425" width="1" height="1" fill="#fff" opacity="0.35"/><rect x="1122" y="745" width="1" height="1" fill="#fff" opacity="0.43"/><rect x="1132" y="522" width="1" height="1" fill="#fff" opacity="0.17"/><rect x="1122" y="162" width="1" height="1" fill="#fff" opacity="0.43"/><rect x="1109" y="542" width="1" height="1" fill="#fff" opacity="0.12"/><rect x="1112" y="498" width="1" height="1" fill="#fff" opacity="0.52"/><rect x="1121" y="228" width="2" height="2" fill="#fff" opacity="0.22"/><rect x="1131" y="514" width="1" height="1" fill="#fff" opacity="0.16"/><rect x="1114" y="552" width="2" height="2" fill="#fff" opacity="0.12"/><rect x="1127" y="366" width="1" height="1" fill="#fff" opacity="0.69"/><rect x="1133" y="694" width="1" height="1" fill="#fff" opacity="0.28"/><rect x="1128" y="355" width="1" height="1" fill="#fff" opacity="0.17"/><rect x="1126" y="374" width="1" height="1" fill="#fff" opacity="0.24"/><rect x="1119" y="581" width="1" height="1" fill="#fff" opacity="0.30"/><rect x="1121" y="269" width="1" height="1" fill="#fff" opacity="0.35"/><rect x="1120" y="321" width="1" height="1" fill="#fff" opacity="0.30"/><rect x="1123" y="280" width="1" height="1" fill="#fff" opacity="0.19"/><rect x="1126" y="432" width="1" height="1" fill="#fff" opacity="0.18"/><rect x="1124" y="746" width="1" height="1" fill="#fff" opacity="0.39"/><rect x="1123" y="315" width="1" height="1" fill="#fff" opacity="0.19"/><rect x="1132" y="296" width="1" height="1" fill="#fff" opacity="0.18"/><rect x="1111" y="507" width="1" height="1" fill="#fff" opacity="0.23"/><rect x="1116" y="724" width="1" height="1" fill="#fff" opacity="0.32"/><rect x="1111" y="730" width="2" height="2" fill="#fff" opacity="0.17"/><rect x="1120" y="413" width="1" height="1" fill="#fff" opacity="0.16"/><rect x="1125" y="264" width="2" height="2" fill="#fff" opacity="0.09"/><rect x="1109" y="173" width="1" height="1" fill="#fff" opacity="0.18"/><rect x="1124" y="567" width="1" height="1" fill="#fff" opacity="0.26"/><rect x="1111" y="521" width="2" height="2" fill="#fff" opacity="0.26"/><rect x="1119" y="562" width="1" height="1" fill="#fff" opacity="0.11"/><rect x="1131" y="395" width="1" height="1" fill="#fff" opacity="0.18"/><rect x="1119" y="487" width="1" height="1" fill="#fff" opacity="0.37"/><rect x="1116" y="341" width="1" height="1" fill="#fff" opacity="0.19"/><rect x="1114" y="743" width="1" height="1" fill="#fff" opacity="0.28"/><rect x="1126" y="268" width="2" height="2" fill="#fff" opacity="0.13"/><rect x="1107" y="218" width="2" height="2" fill="#fff" opacity="0.09"/><rect x="1127" y="732" width="1" height="1" fill="#fff" opacity="0.16"/><rect x="1110" y="550" width="2" height="2" fill="#fff" opacity="0.11"/><rect x="1120" y="153" width="1" height="1" fill="#fff" opacity="0.19"/><rect x="1111" y="572" width="2" height="2" fill="#fff" opacity="0.24"/><rect x="1122" y="360" width="2" height="2" fill="#fff" opacity="0.13"/><rect x="1126" y="186" width="1" height="1" fill="#fff" opacity="0.25"/><rect x="1122" y="106" width="1" height="1" fill="#fff" opacity="0.40"/><rect x="1127" y="669" width="2" height="2" fill="#fff" opacity="0.08"/><rect x="1121" y="541" width="2" height="2" fill="#fff" opacity="0.22"/><rect x="1116" y="544" width="1" height="1" fill="#fff" opacity="0.66"/><rect x="1124" y="358" width="1" height="1" fill="#fff" opacity="0.09"/><rect x="1109" y="574" width="1" height="1" fill="#fff" opacity="0.16"/><rect x="1108" y="252" width="2" height="2" fill="#fff" opacity="0.25"/><rect x="1132" y="297" width="1" height="1" fill="#fff" opacity="0.24"/><rect x="1111" y="541" width="1" height="1" fill="#fff" opacity="0.10"/><rect x="1107" y="712" width="2" height="2" fill="#fff" opacity="0.23"/><rect x="1118" y="572" width="2" height="2" fill="#fff" opacity="0.13"/><rect x="1128" y="624" width="1" height="1" fill="#fff" opacity="0.21"/><rect x="1121" y="587" width="1" height="1" fill="#fff" opacity="0.94"/><rect x="1130" y="322" width="2" height="2" fill="#fff" opacity="0.21"/><rect x="1107" y="346" width="1" height="1" fill="#fff" opacity="0.29"/><rect x="1116" y="561" width="1" height="1" fill="#fff" opacity="0.23"/><rect x="1116" y="123" width="1" height="1" fill="#fff" opacity="0.19"/><rect x="1129" y="161" width="1" height="1" fill="#fff" opacity="0.14"/><rect x="1110" y="464" width="2" height="2" fill="#fff" opacity="0.23"/><rect x="1118" y="446" width="1" height="1" fill="#fff" opacity="0.53"/>
  <rect x="420" y="839" width="1" height="1" fill="#fff" opacity="0.24"/><rect x="335" y="827" width="1" height="1" fill="#fff" opacity="0.17"/><rect x="639" y="799" width="1" height="1" fill="#fff" opacity="0.12"/><rect x="291" y="782" width="1" height="1" fill="#fff" opacity="0.14"/><rect x="654" y="835" width="1" height="1" fill="#fff" opacity="0.23"/><rect x="1142" y="768" width="2" height="2" fill="#fff" opacity="0.16"/><rect x="261" y="782" width="2" height="2" fill="#fff" opacity="0.28"/><rect x="1057" y="809" width="1" height="1" fill="#fff" opacity="0.09"/><rect x="667" y="778" width="1" height="1" fill="#fff" opacity="0.44"/><rect x="894" y="833" width="1" height="1" fill="#fff" opacity="0.16"/><rect x="333" y="823" width="2" height="2" fill="#fff" opacity="0.23"/><rect x="543" y="814" width="1" height="1" fill="#fff" opacity="0.22"/><rect x="348" y="805" width="2" height="2" fill="#fff" opacity="0.10"/><rect x="1068" y="806" width="1" height="1" fill="#fff" opacity="0.28"/><rect x="530" y="784" width="2" height="2" fill="#fff" opacity="0.16"/><rect x="1048" y="777" width="2" height="2" fill="#fff" opacity="0.12"/><rect x="1010" y="765" width="1" height="1" fill="#fff" opacity="0.66"/><rect x="316" y="826" width="2" height="2" fill="#fff" opacity="0.26"/><rect x="617" y="781" width="1" height="1" fill="#fff" opacity="0.18"/><rect x="282" y="769" width="2" height="2" fill="#fff" opacity="0.09"/><rect x="307" y="804" width="2" height="2" fill="#fff" opacity="0.26"/><rect x="667" y="775" width="1" height="1" fill="#fff" opacity="0.12"/><rect x="528" y="815" width="1" height="1" fill="#fff" opacity="0.15"/><rect x="1117" y="763" width="1" height="1" fill="#fff" opacity="0.35"/><rect x="1032" y="766" width="1" height="1" fill="#fff" opacity="0.49"/><rect x="1141" y="809" width="1" height="1" fill="#fff" opacity="0.29"/><rect x="320" y="779" width="1" height="1" fill="#fff" opacity="0.26"/><rect x="566" y="772" width="2" height="2" fill="#fff" opacity="0.22"/><rect x="621" y="820" width="1" height="1" fill="#fff" opacity="0.18"/><rect x="977" y="799" width="1" height="1" fill="#fff" opacity="0.09"/><rect x="308" y="820" width="1" height="1" fill="#fff" opacity="0.21"/><rect x="825" y="829" width="2" height="2" fill="#fff" opacity="0.30"/><rect x="919" y="803" width="1" height="1" fill="#fff" opacity="0.12"/><rect x="512" y="793" width="1" height="1" fill="#fff" opacity="0.12"/><rect x="785" y="835" width="1" height="1" fill="#fff" opacity="0.28"/><rect x="417" y="786" width="1" height="1" fill="#fff" opacity="0.29"/><rect x="968" y="822" width="1" height="1" fill="#fff" opacity="0.15"/><rect x="945" y="786" width="1" height="1" fill="#fff" opacity="0.35"/><rect x="555" y="839" width="1" height="1" fill="#fff" opacity="0.38"/><rect x="480" y="811" width="1" height="1" fill="#fff" opacity="0.47"/><rect x="1090" y="821" width="1" height="1" fill="#fff" opacity="0.45"/><rect x="548" y="797" width="1" height="1" fill="#fff" opacity="0.20"/><rect x="460" y="768" width="1" height="1" fill="#fff" opacity="0.14"/><rect x="942" y="812" width="1" height="1" fill="#fff" opacity="0.55"/><rect x="465" y="828" width="2" height="2" fill="#fff" opacity="0.30"/><rect x="595" y="792" width="1" height="1" fill="#fff" opacity="0.50"/><rect x="912" y="783" width="1" height="1" fill="#fff" opacity="0.45"/><rect x="989" y="792" width="1" height="1" fill="#fff" opacity="0.25"/><rect x="286" y="776" width="1" height="1" fill="#fff" opacity="0.17"/><rect x="948" y="774" width="1" height="1" fill="#fff" opacity="0.23"/><rect x="296" y="799" width="2" height="2" fill="#fff" opacity="0.14"/><rect x="294" y="811" width="1" height="1" fill="#fff" opacity="0.46"/><rect x="508" y="766" width="1" height="1" fill="#fff" opacity="0.51"/><rect x="823" y="792" width="1" height="1" fill="#fff" opacity="0.50"/><rect x="890" y="810" width="1" height="1" fill="#fff" opacity="0.15"/><rect x="1119" y="768" width="1" height="1" fill="#fff" opacity="0.53"/><rect x="781" y="797" width="1" height="1" fill="#fff" opacity="0.28"/><rect x="613" y="825" width="1" height="1" fill="#fff" opacity="0.13"/><rect x="1079" y="790" width="1" height="1" fill="#fff" opacity="0.29"/><rect x="731" y="821" width="1" height="1" fill="#fff" opacity="0.44"/><rect x="514" y="833" width="2" height="2" fill="#fff" opacity="0.19"/><rect x="884" y="770" width="1" height="1" fill="#fff" opacity="0.24"/><rect x="515" y="795" width="1" height="1" fill="#fff" opacity="0.25"/><rect x="862" y="798" width="1" height="1" fill="#fff" opacity="0.14"/><rect x="752" y="834" width="1" height="1" fill="#fff" opacity="0.47"/><rect x="1134" y="802" width="2" height="2" fill="#fff" opacity="0.27"/><rect x="383" y="784" width="1" height="1" fill="#fff" opacity="0.51"/><rect x="998" y="785" width="2" height="2" fill="#fff" opacity="0.19"/><rect x="479" y="780" width="1" height="1" fill="#fff" opacity="0.25"/><rect x="817" y="773" width="1" height="1" fill="#fff" opacity="0.09"/><rect x="684" y="786" width="1" height="1" fill="#fff" opacity="0.09"/><rect x="990" y="764" width="1" height="1" fill="#fff" opacity="0.41"/><rect x="1101" y="824" width="1" height="1" fill="#fff" opacity="0.44"/><rect x="752" y="832" width="2" height="2" fill="#fff" opacity="0.19"/><rect x="882" y="792" width="1" height="1" fill="#fff" opacity="0.64"/><rect x="508" y="771" width="1" height="1" fill="#fff" opacity="0.46"/><rect x="656" y="809" width="1" height="1" fill="#fff" opacity="0.49"/><rect x="611" y="822" width="2" height="2" fill="#fff" opacity="0.24"/><rect x="832" y="814" width="2" height="2" fill="#fff" opacity="0.29"/><rect x="546" y="792" width="2" height="2" fill="#fff" opacity="0.15"/><rect x="458" y="765" width="2" height="2" fill="#fff" opacity="0.14"/><rect x="452" y="829" width="1" height="1" fill="#fff" opacity="0.27"/><rect x="826" y="770" width="1" height="1" fill="#fff" opacity="0.41"/><rect x="334" y="840" width="2" height="2" fill="#fff" opacity="0.24"/><rect x="637" y="800" width="2" height="2" fill="#fff" opacity="0.20"/><rect x="763" y="825" width="2" height="2" fill="#fff" opacity="0.09"/><rect x="955" y="823" width="1" height="1" fill="#fff" opacity="0.22"/><rect x="1101" y="826" width="1" height="1" fill="#fff" opacity="0.30"/><rect x="624" y="828" width="1" height="1" fill="#fff" opacity="0.09"/><rect x="901" y="821" width="1" height="1" fill="#fff" opacity="0.22"/><rect x="248" y="780" width="1" height="1" fill="#fff" opacity="0.10"/><rect x="1066" y="763" width="1" height="1" fill="#fff" opacity="0.63"/><rect x="688" y="801" width="1" height="1" fill="#fff" opacity="0.85"/><rect x="1133" y="835" width="1" height="1" fill="#fff" opacity="0.11"/><rect x="827" y="825" width="2" height="2" fill="#fff" opacity="0.24"/><rect x="618" y="767" width="1" height="1" fill="#fff" opacity="0.23"/><rect x="475" y="824" width="1" height="1" fill="#fff" opacity="0.12"/><rect x="581" y="818" width="2" height="2" fill="#fff" opacity="0.19"/><rect x="226" y="826" width="1" height="1" fill="#fff" opacity="0.23"/><rect x="384" y="827" width="1" height="1" fill="#fff" opacity="0.27"/><rect x="353" y="828" width="1" height="1" fill="#fff" opacity="0.28"/><rect x="533" y="803" width="1" height="1" fill="#fff" opacity="0.47"/><rect x="1064" y="832" width="1" height="1" fill="#fff" opacity="0.82"/><rect x="788" y="800" width="2" height="2" fill="#fff" opacity="0.26"/><rect x="1099" y="807" width="1" height="1" fill="#fff" opacity="0.41"/><rect x="844" y="836" width="1" height="1" fill="#fff" opacity="0.11"/><rect x="274" y="789" width="2" height="2" fill="#fff" opacity="0.23"/><rect x="767" y="829" width="1" height="1" fill="#fff" opacity="0.40"/><rect x="932" y="772" width="2" height="2" fill="#fff" opacity="0.27"/><rect x="1016" y="795" width="2" height="2" fill="#fff" opacity="0.15"/><rect x="1041" y="840" width="2" height="2" fill="#fff" opacity="0.25"/><rect x="779" y="803" width="2" height="2" fill="#fff" opacity="0.19"/><rect x="303" y="777" width="1" height="1" fill="#fff" opacity="0.18"/><rect x="723" y="779" width="1" height="1" fill="#fff" opacity="0.10"/><rect x="531" y="819" width="1" height="1" fill="#fff" opacity="0.45"/><rect x="1116" y="821" width="1" height="1" fill="#fff" opacity="0.29"/><rect x="657" y="800" width="2" height="2" fill="#fff" opacity="0.27"/><rect x="1132" y="825" width="2" height="2" fill="#fff" opacity="0.25"/><rect x="585" y="798" width="1" height="1" fill="#fff" opacity="0.26"/><rect x="1134" y="808" width="1" height="1" fill="#fff" opacity="0.26"/><rect x="1071" y="821" width="2" height="2" fill="#fff" opacity="0.29"/><rect x="315" y="807" width="1" height="1" fill="#fff" opacity="0.24"/><rect x="539" y="767" width="1" height="1" fill="#fff" opacity="0.29"/><rect x="1066" y="807" width="1" height="1" fill="#fff" opacity="0.23"/><rect x="475" y="838" width="1" height="1" fill="#fff" opacity="0.09"/><rect x="800" y="786" width="1" height="1" fill="#fff" opacity="0.10"/><rect x="378" y="820" width="1" height="1" fill="#fff" opacity="0.13"/><rect x="619" y="824" width="1" height="1" fill="#fff" opacity="0.16"/><rect x="704" y="802" width="2" height="2" fill="#fff" opacity="0.10"/><rect x="554" y="789" width="1" height="1" fill="#fff" opacity="0.12"/><rect x="607" y="799" width="1" height="1" fill="#fff" opacity="0.11"/><rect x="325" y="798" width="2" height="2" fill="#fff" opacity="0.19"/><rect x="606" y="772" width="2" height="2" fill="#fff" opacity="0.29"/><rect x="601" y="773" width="1" height="1" fill="#fff" opacity="0.12"/><rect x="396" y="811" width="1" height="1" fill="#fff" opacity="0.51"/><rect x="1067" y="780" width="1" height="1" fill="#fff" opacity="0.26"/><rect x="1136" y="792" width="2" height="2" fill="#fff" opacity="0.19"/><rect x="989" y="796" width="1" height="1" fill="#fff" opacity="0.11"/><rect x="1071" y="810" width="1" height="1" fill="#fff" opacity="0.36"/><rect x="1008" y="776" width="2" height="2" fill="#fff" opacity="0.14"/><rect x="572" y="798" width="1" height="1" fill="#fff" opacity="0.10"/><rect x="1076" y="797" width="1" height="1" fill="#fff" opacity="0.13"/><rect x="1064" y="809" width="2" height="2" fill="#fff" opacity="0.20"/><rect x="548" y="819" width="2" height="2" fill="#fff" opacity="0.14"/><rect x="555" y="814" width="1" height="1" fill="#fff" opacity="0.09"/><rect x="1092" y="767" width="1" height="1" fill="#fff" opacity="0.24"/><rect x="507" y="783" width="1" height="1" fill="#fff" opacity="0.90"/><rect x="541" y="803" width="1" height="1" fill="#fff" opacity="0.26"/><rect x="1127" y="832" width="1" height="1" fill="#fff" opacity="0.43"/><rect x="471" y="813" width="1" height="1" fill="#fff" opacity="0.12"/><rect x="927" y="788" width="1" height="1" fill="#fff" opacity="0.13"/><rect x="1087" y="833" width="1" height="1" fill="#fff" opacity="0.25"/><rect x="1017" y="788" width="1" height="1" fill="#fff" opacity="0.49"/><rect x="804" y="818" width="2" height="2" fill="#fff" opacity="0.23"/><rect x="989" y="805" width="1" height="1" fill="#fff" opacity="0.26"/><rect x="728" y="787" width="1" height="1" fill="#fff" opacity="0.13"/><rect x="864" y="820" width="1" height="1" fill="#fff" opacity="0.11"/><rect x="625" y="839" width="2" height="2" fill="#fff" opacity="0.29"/><rect x="491" y="833" width="2" height="2" fill="#fff" opacity="0.18"/><rect x="861" y="823" width="1" height="1" fill="#fff" opacity="0.46"/><rect x="721" y="828" width="2" height="2" fill="#fff" opacity="0.29"/><rect x="207" y="786" width="1" height="1" fill="#fff" opacity="0.33"/><rect x="220" y="809" width="2" height="2" fill="#fff" opacity="0.30"/><rect x="1036" y="809" width="1" height="1" fill="#fff" opacity="0.08"/><rect x="328" y="812" width="1" height="1" fill="#fff" opacity="0.15"/><rect x="734" y="813" width="1" height="1" fill="#fff" opacity="0.20"/><rect x="668" y="823" width="2" height="2" fill="#fff" opacity="0.29"/><rect x="756" y="832" width="1" height="1" fill="#fff" opacity="0.24"/><rect x="1000" y="805" width="2" height="2" fill="#fff" opacity="0.26"/><rect x="561" y="816" width="1" height="1" fill="#fff" opacity="0.51"/><rect x="965" y="816" width="1" height="1" fill="#fff" opacity="0.44"/><rect x="573" y="788" width="2" height="2" fill="#fff" opacity="0.15"/><rect x="216" y="787" width="1" height="1" fill="#fff" opacity="0.20"/><rect x="521" y="801" width="1" height="1" fill="#fff" opacity="0.21"/><rect x="545" y="776" width="1" height="1" fill="#fff" opacity="0.25"/><rect x="979" y="838" width="1" height="1" fill="#fff" opacity="0.21"/><rect x="739" y="833" width="1" height="1" fill="#fff" opacity="0.14"/><rect x="349" y="801" width="2" height="2" fill="#fff" opacity="0.10"/><rect x="689" y="784" width="1" height="1" fill="#fff" opacity="0.33"/><rect x="754" y="829" width="1" height="1" fill="#fff" opacity="0.09"/><rect x="533" y="791" width="2" height="2" fill="#fff" opacity="0.25"/><rect x="1042" y="808" width="1" height="1" fill="#fff" opacity="0.46"/><rect x="357" y="795" width="1" height="1" fill="#fff" opacity="0.18"/><rect x="587" y="815" width="1" height="1" fill="#fff" opacity="0.23"/><rect x="490" y="806" width="1" height="1" fill="#fff" opacity="0.29"/><rect x="277" y="789" width="1" height="1" fill="#fff" opacity="0.17"/><rect x="483" y="787" width="1" height="1" fill="#fff" opacity="0.14"/><rect x="208" y="797" width="1" height="1" fill="#fff" opacity="0.46"/><rect x="421" y="771" width="1" height="1" fill="#fff" opacity="0.32"/><rect x="787" y="810" width="2" height="2" fill="#fff" opacity="0.18"/><rect x="1148" y="769" width="1" height="1" fill="#fff" opacity="0.14"/><rect x="727" y="791" width="1" height="1" fill="#fff" opacity="0.19"/><rect x="644" y="781" width="1" height="1" fill="#fff" opacity="0.13"/><rect x="252" y="772" width="1" height="1" fill="#fff" opacity="0.53"/><rect x="1026" y="820" width="1" height="1" fill="#fff" opacity="0.11"/><rect x="1005" y="817" width="1" height="1" fill="#fff" opacity="0.50"/><rect x="561" y="817" width="1" height="1" fill="#fff" opacity="0.26"/><rect x="565" y="796" width="2" height="2" fill="#fff" opacity="0.18"/><rect x="440" y="784" width="1" height="1" fill="#fff" opacity="0.28"/><rect x="960" y="766" width="1" height="1" fill="#fff" opacity="0.21"/><rect x="701" y="798" width="1" height="1" fill="#fff" opacity="0.14"/><rect x="493" y="775" width="1" height="1" fill="#fff" opacity="0.16"/><rect x="482" y="777" width="2" height="2" fill="#fff" opacity="0.15"/><rect x="863" y="764" width="1" height="1" fill="#fff" opacity="0.47"/><rect x="726" y="808" width="1" height="1" fill="#fff" opacity="0.52"/><rect x="786" y="777" width="1" height="1" fill="#fff" opacity="0.18"/><rect x="1076" y="783" width="1" height="1" fill="#fff" opacity="0.17"/><rect x="856" y="775" width="1" height="1" fill="#fff" opacity="0.23"/><rect x="998" y="791" width="1" height="1" fill="#fff" opacity="0.18"/><rect x="241" y="785" width="1" height="1" fill="#fff" opacity="0.52"/><rect x="936" y="796" width="2" height="2" fill="#fff" opacity="0.15"/><rect x="213" y="808" width="1" height="1" fill="#fff" opacity="0.46"/><rect x="329" y="815" width="2" height="2" fill="#fff" opacity="0.18"/><rect x="1072" y="784" width="1" height="1" fill="#fff" opacity="0.44"/><rect x="530" y="780" width="1" height="1" fill="#fff" opacity="0.15"/><rect x="500" y="766" width="2" height="2" fill="#fff" opacity="0.21"/><rect x="790" y="797" width="1" height="1" fill="#fff" opacity="0.82"/><rect x="1037" y="831" width="1" height="1" fill="#fff" opacity="0.09"/><rect x="692" y="808" width="2" height="2" fill="#fff" opacity="0.17"/><rect x="926" y="827" width="1" height="1" fill="#fff" opacity="0.10"/><rect x="927" y="770" width="2" height="2" fill="#fff" opacity="0.14"/><rect x="944" y="815" width="1" height="1" fill="#fff" opacity="0.54"/><rect x="678" y="823" width="1" height="1" fill="#fff" opacity="0.39"/><rect x="492" y="779" width="1" height="1" fill="#fff" opacity="0.17"/><rect x="225" y="781" width="1" height="1" fill="#fff" opacity="0.76"/><rect x="280" y="837" width="2" height="2" fill="#fff" opacity="0.22"/><rect x="382" y="780" width="1" height="1" fill="#fff" opacity="0.33"/><rect x="552" y="783" width="1" height="1" fill="#fff" opacity="0.26"/><rect x="223" y="788" width="2" height="2" fill="#fff" opacity="0.20"/><rect x="890" y="791" width="2" height="2" fill="#fff" opacity="0.19"/>
</g>


<defs>
  <pattern id="sgrid" width="2" height="2" patternUnits="userSpaceOnUse"><rect width="2" height="2" fill="#124359"/><rect width="1" height="1" fill="#07283a"/><rect x="1" width="1" height="1" fill="#0c3449"/></pattern>
  <clipPath id="sideclip"><path d="M2 103H204L170 137V606L147 628H28V138L2 112z"/></clipPath>
  <radialGradient id="galglow" cx="50%" cy="50%" r="50%"><stop offset="0" stop-color="#3a8a3a" stop-opacity=".55"/><stop offset=".5" stop-color="#2a6a50" stop-opacity=".3"/><stop offset="1" stop-color="#1a4a60" stop-opacity="0"/></radialGradient>
</defs>

<g id="sidebar">
  <g clip-path="url(#sideclip)">
    <rect x="2" y="103" width="204" height="530" fill="url(#sgrid)"/>
    <!-- faint construction lines -->
    <g stroke="#6f9aac" stroke-width="1" opacity=".35" fill="none">
      <path d="M54 140V628M76 140V628M116 140V628M130 140V628"/>
      <path d="M30 260L108 140M30 300L135 140M34 420L150 230"/>
      <path d="M30 230H170M30 560H170"/>
    </g>
    <!-- alliance emblem watermark -->
    <g opacity=".16" fill="none" stroke="#9cc0d0" stroke-width="6">
      <path d="M70 300a32 30 0 1 1 60 -10"/>
      <path d="M60 290c30 8 70 4 110-10" stroke-width="4"/>
    </g>
    <!-- galaxy glow -->
    <ellipse cx="70" cy="408" rx="34" ry="20" fill="url(#galglow)" transform="rotate(28 70 408)"/>
    <g filter="url(#nblur2)" opacity=".5"><ellipse cx="98" cy="430" rx="26" ry="8" fill="#8a6a48" transform="rotate(30 98 430)"/><ellipse cx="62" cy="400" rx="12" ry="7" fill="#6ab060" transform="rotate(30 62 400)"/></g>
    <g opacity=".25" fill="none" stroke="#a8c8d4" stroke-width="1.2">
      <path d="M34 440q60-30 130 0M34 452q60-30 130 0M34 464q60-34 130 -4"/>
      <ellipse cx="100" cy="548" rx="74" ry="30" opacity=".7"/><ellipse cx="100" cy="552" rx="60" ry="18" opacity=".6"/>
    </g>
    <path d="M193 105h2v2h-2zM196 105h2v2h-2zM190 108h2v2h-2zM193 108h2v2h-2zM187 111h2v2h-2zM190 111h2v2h-2zM184 114h2v2h-2zM187 114h2v2h-2zM181 117h2v2h-2zM184 117h2v2h-2zM172 120h2v2h-2zM175 120h2v2h-2zM178 120h2v2h-2zM181 120h2v2h-2zM151 123h2v2h-2zM154 123h2v2h-2zM157 123h2v2h-2zM160 123h2v2h-2zM163 123h2v2h-2zM166 123h2v2h-2zM169 123h2v2h-2zM172 123h2v2h-2zM175 123h2v2h-2zM178 123h2v2h-2zM151 126h2v2h-2zM154 126h2v2h-2zM157 126h2v2h-2zM160 126h2v2h-2zM163 126h2v2h-2zM166 126h2v2h-2zM169 126h2v2h-2zM172 126h2v2h-2zM175 126h2v2h-2zM151 129h2v2h-2zM154 129h2v2h-2zM157 129h2v2h-2zM160 129h2v2h-2zM163 129h2v2h-2zM166 129h2v2h-2zM169 129h2v2h-2zM172 129h2v2h-2zM151 132h2v2h-2zM154 132h2v2h-2zM157 132h2v2h-2zM160 132h2v2h-2zM163 132h2v2h-2zM166 132h2v2h-2zM169 132h2v2h-2zM151 135h2v2h-2zM154 135h2v2h-2zM157 135h2v2h-2zM160 135h2v2h-2zM163 135h2v2h-2zM166 135h2v2h-2zM151 138h2v2h-2zM154 138h2v2h-2zM157 138h2v2h-2zM160 138h2v2h-2zM163 138h2v2h-2zM151 141h2v2h-2zM154 141h2v2h-2zM157 141h2v2h-2zM160 141h2v2h-2zM163 141h2v2h-2zM151 144h2v2h-2zM154 144h2v2h-2zM157 144h2v2h-2zM160 144h2v2h-2zM163 144h2v2h-2zM151 147h2v2h-2zM154 147h2v2h-2zM157 147h2v2h-2zM160 147h2v2h-2zM163 147h2v2h-2zM154 150h2v2h-2zM157 150h2v2h-2zM160 150h2v2h-2zM163 150h2v2h-2zM154 153h2v2h-2zM157 153h2v2h-2zM160 153h2v2h-2zM163 153h2v2h-2zM154 156h2v2h-2zM157 156h2v2h-2zM160 156h2v2h-2zM163 156h2v2h-2zM154 159h2v2h-2zM157 159h2v2h-2zM160 159h2v2h-2zM163 159h2v2h-2zM157 162h2v2h-2zM160 162h2v2h-2zM163 162h2v2h-2zM157 165h2v2h-2zM160 165h2v2h-2zM163 165h2v2h-2zM157 168h2v2h-2zM160 168h2v2h-2zM163 168h2v2h-2zM157 171h2v2h-2zM160 171h2v2h-2zM163 171h2v2h-2zM160 174h2v2h-2zM163 174h2v2h-2zM160 177h2v2h-2zM163 177h2v2h-2zM160 180h2v2h-2zM163 180h2v2h-2zM160 183h2v2h-2zM163 183h2v2h-2zM163 186h2v2h-2zM163 189h2v2h-2z" fill="#c8c8c8"/><path d="M140 205h2v2h-2zM140 208h2v2h-2zM143 208h2v2h-2zM143 211h2v2h-2zM146 211h2v2h-2zM143 214h2v2h-2zM146 214h2v2h-2zM149 214h2v2h-2zM146 217h2v2h-2zM149 217h2v2h-2zM152 217h2v2h-2zM146 220h2v2h-2zM149 220h2v2h-2zM152 220h2v2h-2zM155 220h2v2h-2zM149 223h2v2h-2zM152 223h2v2h-2zM155 223h2v2h-2zM158 223h2v2h-2zM149 226h2v2h-2zM152 226h2v2h-2zM155 226h2v2h-2zM158 226h2v2h-2zM161 226h2v2h-2zM152 229h2v2h-2zM155 229h2v2h-2zM158 229h2v2h-2zM161 229h2v2h-2zM152 232h2v2h-2zM155 232h2v2h-2zM158 232h2v2h-2zM161 232h2v2h-2zM152 235h2v2h-2zM155 235h2v2h-2zM158 235h2v2h-2zM161 235h2v2h-2zM152 238h2v2h-2zM155 238h2v2h-2zM158 238h2v2h-2zM161 238h2v2h-2zM155 241h2v2h-2zM158 241h2v2h-2zM161 241h2v2h-2zM155 244h2v2h-2zM158 244h2v2h-2zM161 244h2v2h-2zM155 247h2v2h-2zM158 247h2v2h-2zM161 247h2v2h-2zM155 250h2v2h-2zM158 250h2v2h-2zM161 250h2v2h-2zM158 253h2v2h-2zM161 253h2v2h-2zM158 256h2v2h-2zM161 256h2v2h-2zM158 259h2v2h-2zM161 259h2v2h-2zM158 262h2v2h-2zM161 262h2v2h-2zM158 265h2v2h-2zM161 265h2v2h-2zM161 268h2v2h-2zM161 271h2v2h-2z" fill="#c8c8c8"/><path d="M143 285h2v2h-2zM146 285h2v2h-2zM143 288h2v2h-2zM146 288h2v2h-2zM149 288h2v2h-2zM146 291h2v2h-2zM149 291h2v2h-2zM152 291h2v2h-2zM149 294h2v2h-2zM152 294h2v2h-2zM155 294h2v2h-2zM149 297h2v2h-2zM152 297h2v2h-2zM155 297h2v2h-2zM158 297h2v2h-2zM152 300h2v2h-2zM155 300h2v2h-2zM158 300h2v2h-2zM155 303h2v2h-2zM158 303h2v2h-2zM158 306h2v2h-2z" fill="#c8c8c8"/><path d="M154 358h2v2h-2zM157 358h2v2h-2zM154 361h2v2h-2zM157 361h2v2h-2zM151 364h2v2h-2zM154 364h2v2h-2zM157 364h2v2h-2zM151 367h2v2h-2zM154 367h2v2h-2zM157 367h2v2h-2zM148 370h2v2h-2zM151 370h2v2h-2zM154 370h2v2h-2zM157 370h2v2h-2zM148 373h2v2h-2zM151 373h2v2h-2zM154 373h2v2h-2zM145 376h2v2h-2zM148 376h2v2h-2zM151 376h2v2h-2zM154 376h2v2h-2zM142 379h2v2h-2zM145 379h2v2h-2zM148 379h2v2h-2zM151 379h2v2h-2zM154 379h2v2h-2zM139 382h2v2h-2zM142 382h2v2h-2zM145 382h2v2h-2zM148 382h2v2h-2zM151 382h2v2h-2zM154 382h2v2h-2zM139 385h2v2h-2zM142 385h2v2h-2zM145 385h2v2h-2zM148 385h2v2h-2zM151 385h2v2h-2zM142 388h2v2h-2zM145 388h2v2h-2zM148 388h2v2h-2zM151 388h2v2h-2zM145 391h2v2h-2zM148 391h2v2h-2zM148 394h2v2h-2z" fill="#c8c8c8"/><path d="M161 428h2v2h-2zM164 428h2v2h-2zM158 431h2v2h-2zM161 431h2v2h-2zM164 431h2v2h-2zM158 434h2v2h-2zM161 434h2v2h-2zM164 434h2v2h-2zM158 437h2v2h-2zM161 437h2v2h-2zM164 437h2v2h-2zM158 440h2v2h-2zM161 440h2v2h-2zM164 440h2v2h-2zM158 443h2v2h-2zM161 443h2v2h-2zM164 443h2v2h-2zM158 446h2v2h-2zM161 446h2v2h-2zM164 446h2v2h-2zM158 449h2v2h-2zM161 449h2v2h-2zM158 452h2v2h-2zM161 452h2v2h-2zM158 455h2v2h-2zM161 455h2v2h-2zM158 458h2v2h-2zM161 458h2v2h-2z" fill="#c8c8c8"/><path d="M154 466h2v2h-2zM157 466h2v2h-2zM160 466h2v2h-2zM163 466h2v2h-2zM151 469h2v2h-2zM154 469h2v2h-2zM157 469h2v2h-2zM160 469h2v2h-2zM163 469h2v2h-2zM166 469h2v2h-2zM148 472h2v2h-2zM151 472h2v2h-2zM154 472h2v2h-2zM157 472h2v2h-2zM160 472h2v2h-2zM163 472h2v2h-2zM166 472h2v2h-2zM145 475h2v2h-2zM148 475h2v2h-2zM151 475h2v2h-2zM154 475h2v2h-2zM157 475h2v2h-2zM160 475h2v2h-2zM163 475h2v2h-2zM166 475h2v2h-2zM142 478h2v2h-2zM145 478h2v2h-2zM148 478h2v2h-2zM151 478h2v2h-2zM154 478h2v2h-2zM157 478h2v2h-2zM160 478h2v2h-2zM163 478h2v2h-2zM145 481h2v2h-2zM148 481h2v2h-2zM151 481h2v2h-2zM154 481h2v2h-2zM157 481h2v2h-2zM160 481h2v2h-2zM148 484h2v2h-2zM151 484h2v2h-2zM154 484h2v2h-2zM157 484h2v2h-2zM151 487h2v2h-2zM154 487h2v2h-2z" fill="#c8c8c8"/><path d="M164 540h2v2h-2zM164 543h2v2h-2zM161 549h2v2h-2zM164 549h2v2h-2zM164 555h2v2h-2zM164 558h2v2h-2zM161 561h2v2h-2zM164 561h2v2h-2zM164 564h2v2h-2zM161 567h2v2h-2zM164 567h2v2h-2zM161 570h2v2h-2zM164 570h2v2h-2zM161 573h2v2h-2zM164 573h2v2h-2zM158 576h2v2h-2zM161 576h2v2h-2zM164 576h2v2h-2zM161 579h2v2h-2zM164 579h2v2h-2zM158 582h2v2h-2zM161 582h2v2h-2zM164 582h2v2h-2zM158 585h2v2h-2zM161 585h2v2h-2zM164 585h2v2h-2zM167 585h2v2h-2zM158 588h2v2h-2zM161 588h2v2h-2zM164 588h2v2h-2zM167 588h2v2h-2zM158 591h2v2h-2zM161 591h2v2h-2zM164 591h2v2h-2zM167 591h2v2h-2zM158 594h2v2h-2zM161 594h2v2h-2zM164 594h2v2h-2zM167 594h2v2h-2zM158 597h2v2h-2zM161 597h2v2h-2zM164 597h2v2h-2zM167 597h2v2h-2zM155 600h2v2h-2zM158 600h2v2h-2zM161 600h2v2h-2zM164 600h2v2h-2zM167 600h2v2h-2zM152 603h2v2h-2zM155 603h2v2h-2zM158 603h2v2h-2zM161 603h2v2h-2zM164 603h2v2h-2zM167 603h2v2h-2zM149 606h2v2h-2zM152 606h2v2h-2zM155 606h2v2h-2zM158 606h2v2h-2zM161 606h2v2h-2zM164 606h2v2h-2zM146 609h2v2h-2zM149 609h2v2h-2zM152 609h2v2h-2zM155 609h2v2h-2zM158 609h2v2h-2zM161 609h2v2h-2zM143 612h2v2h-2zM146 612h2v2h-2zM149 612h2v2h-2zM152 612h2v2h-2zM155 612h2v2h-2zM158 612h2v2h-2zM140 615h2v2h-2zM143 615h2v2h-2zM146 615h2v2h-2zM149 615h2v2h-2zM152 615h2v2h-2zM155 615h2v2h-2zM140 618h2v2h-2zM143 618h2v2h-2zM146 618h2v2h-2zM149 618h2v2h-2zM152 618h2v2h-2zM140 621h2v2h-2zM143 621h2v2h-2zM146 621h2v2h-2zM149 621h2v2h-2z" fill="#c8c8c8"/>
    <!-- right inner light strip pieces -->
    <g fill="#b4b6b6">
      <path d="M163 222h4v40h-4z" opacity=".55"/>
      <path d="M163 312h4v58h-4z" opacity=".5"/>
      <path d="M152 385l10-10h6v45h-5v-24z"/>
      <path d="M160 425h7v36h-3v-28z" opacity=".8"/>
      <path d="M163 482h3.500v38l-2 3z" opacity=".75"/>
    </g>
  </g>
  <!-- dashed header bar -->
  <path d="M35 141h4v3h-4zM41 141h5v3h-5zM48 141h4v3h-4zM54 141h3v3h-3zM59 141h5v3h-5zM76 141h7v3h-7zM85 141h4v3h-4zM91 141h6v3h-6zM101 141h16v3h-16zM119 141h3v3h-3zM124 141h14v3h-14zM140 141h8v3h-8z" fill="#aeb0b0"/>
  <!-- section divider lines -->
  <g fill="none" stroke="#8f9496" stroke-width="1.6">
    <path d="M33 189H130L162 221V262"/>
    <path d="M34 277H128L162 311V372"/>
    <path d="M34 375H145"/>
    <path d="M34 465H160"/>
  </g>
  <!-- left border -->
  <g>
    <rect x="24" y="137" width="2" height="492" fill="#3c4246"/>
    <rect x="26" y="137" width="2" height="492" fill="#1c2226"/>
    <rect x="28" y="140" width="2" height="488" fill="#7c8488"/>
    <rect x="32" y="150" width="1" height="470" fill="#5f7780"/>
    <rect x="25" y="137" width="4" height="18" fill="#a8aaaa"/>
    <rect x="29" y="330" width="4" height="40" fill="#a8aaaa" opacity=".8"/>
    <rect x="29" y="465" width="4" height="70" fill="#a8aaaa" opacity=".8"/>
    <rect x="25" y="600" width="4" height="28" fill="#8c9092"/>
  </g>
  <!-- right border -->
  <g>
    <rect x="168" y="138" width="2" height="470" fill="#454d52"/>
    <rect x="170" y="138" width="2" height="474" fill="#15191c"/>
    <rect x="167" y="138" width="4" height="22" fill="#b0b2b2"/>
    <rect x="170" y="590" width="3" height="30" fill="#6c7074"/>
  </g>
  <!-- header diagonal edges -->
  <path d="M2 112L28 138" stroke="#0a0c0e" stroke-width="2.500" fill="none"/>
  <path d="M2 114.500L26 138.500" stroke="#a8acae" stroke-width="1" fill="none"/>
  <path d="M204 103L170 137" stroke="#0a0c0e" stroke-width="2.500" fill="none"/>
  <path d="M205 104.500L172 137.500" stroke="#7c8084" stroke-width="1" fill="none"/>
  <!-- bottom edge -->
  <path d="M28 628H147L169 606" stroke="#a4a6a6" stroke-width="2" fill="none"/>
  <path d="M30 612h10v12l4 4H30z" fill="#9a9c9c"/>
  <!-- logo swoosh -->
  <g fill="#e2e4e6">
    <path d="M23.500 112.500C33 112 44 112.500 50 116C47 122 44 130 42.700 139C42 130 43.500 122 46 117.500C40 114.500 31 113.500 23.500 112.500z"/>
    <path d="M47.600 108.900A10.500 10.500 0 1 1 55.700 122.800L55.100 121.400A8 8 0 1 0 49 110.800z"/>
    <path d="M62.500 109.500L51 119.500L49.500 123.500L53.500 121.500L56.500 126.500L57.500 119L62 113z"/>
  </g>
  <g fill="#b8c4c8" opacity=".45"><rect x="22" y="123" width="16" height="1"/><rect x="22" y="125" width="9" height="1"/><rect x="57" y="131" width="9" height="1"/><rect x="53" y="134" width="13" height="1"/><rect x="54" y="137" width="12" height="1"/>
  <rect x="137" y="105" width="12" height="1"/><rect x="137" y="107" width="9" height="1"/><rect x="137" y="110" width="11" height="1"/><rect x="137" y="112" width="8" height="1"/><rect x="151" y="126" width="9" height="1"/><rect x="151" y="128" width="7" height="1"/></g>
  <path d="M70 118.800H160" stroke="#e0222a" stroke-width="1.800"/><path d="M160 118.500H176" stroke="#c0202a" stroke-width="1"/>
</g>


<g id="mainframe">
  <rect x="208" y="103" width="894" height="660" fill="url(#grid)"/>
  <!-- subtle lighter streaks -->
  <g stroke="#5c8a9c" stroke-width="1" opacity=".22" fill="none">
    <path d="M212 262q40-24 62-30M225 245q30-14 48-20"/>
    <path d="M1052 190l46-18M1052 232l46-22M1052 262l44-26M1060 300l36-36"/>
    <path d="M212 595q30 10 60 30M212 610q30 10 60 34"/>
    <path d="M1052 610q20 6 46 16M1052 630q20 6 46 18M1052 650q20 6 46 20"/>
  </g>
  <rect x="208" y="103" width="894" height="30" fill="#103848" opacity=".35"/>
  <!-- left border decor -->
  <rect x="206" y="103" width="2" height="660" fill="#2a3034"/>
  <rect x="208" y="103" width="1" height="660" fill="#70787c"/>
  <g fill="#b2b6b8">
    <path d="M211 176h1v48h-1zM213.500 172h1.500v50h-1.500z" opacity=".8"/><path d="M216 180h2v2h-2zM216 183h2v2h-2zM216 186h2v2h-2zM216 189h2v2h-2zM216 192h2v2h-2zM216 195h2v2h-2zM216 198h2v2h-2zM216 201h2v2h-2zM216 204h2v2h-2zM216 207h2v2h-2zM216 210h2v2h-2zM216 213h2v2h-2zM216 216h2v2h-2zM216 219h2v2h-2zM216 222h2v2h-2z" opacity=".85"/>
    <path d="M210 235h2.700v95l10.300 10v7l-7 2l-1 16l-3 13h-2z"/>
    <path d="M214 382h3.500v8h-3.500z" fill="#8c9092"/>
    <path d="M210 436h6v8l-3 4v16h-3z" opacity=".95"/>
    <path d="M214 416h3v8h-3z" fill="#8c9092"/>
    <path d="M210 589h5v11h-5z" fill="#8a8e90"/><path d="M209 600h1.500v42h-1.500z" fill="#9a9ea0"/>
    <path d="M207 640h3v90h-3z" opacity=".7"/>
    <path d="M228 254l1 1-15 20-1-1z"/>
  </g>
  <path d="M213 270V235" stroke="#d8dadc" stroke-width="1"/>
  <path d="M210 104h2v2h-2zM213 104h2v2h-2zM210 107h2v2h-2zM213 107h2v2h-2zM216 107h2v2h-2zM210 110h2v2h-2zM213 110h2v2h-2zM216 110h2v2h-2zM219 110h2v2h-2zM210 113h2v2h-2zM213 113h2v2h-2zM216 113h2v2h-2zM219 113h2v2h-2zM210 116h2v2h-2zM213 116h2v2h-2zM216 116h2v2h-2zM219 116h2v2h-2zM210 119h2v2h-2zM213 119h2v2h-2zM216 119h2v2h-2zM219 119h2v2h-2zM210 122h2v2h-2zM213 122h2v2h-2zM216 122h2v2h-2zM219 122h2v2h-2zM210 125h2v2h-2zM213 125h2v2h-2zM216 125h2v2h-2zM210 128h2v2h-2zM213 128h2v2h-2zM216 128h2v2h-2zM210 131h2v2h-2zM213 131h2v2h-2zM216 131h2v2h-2zM210 134h2v2h-2zM213 134h2v2h-2zM210 137h2v2h-2zM213 137h2v2h-2zM216 137h2v2h-2zM210 140h2v2h-2zM213 140h2v2h-2zM210 143h2v2h-2zM210 146h2v2h-2zM213 146h2v2h-2zM210 149h2v2h-2zM210 152h2v2h-2zM210 155h2v2h-2zM213 155h2v2h-2zM210 158h2v2h-2zM210 161h2v2h-2zM210 164h2v2h-2z" fill="#c8c8c8"/><path d="M217 247h2v2h-2zM220 247h2v2h-2zM223 247h2v2h-2zM214 250h2v2h-2zM217 250h2v2h-2zM220 250h2v2h-2zM223 250h2v2h-2zM214 253h2v2h-2zM217 253h2v2h-2zM220 253h2v2h-2zM223 253h2v2h-2zM214 256h2v2h-2zM217 256h2v2h-2zM220 256h2v2h-2zM214 259h2v2h-2zM217 259h2v2h-2z" fill="#c8c8c8"/><path d="M216 317h2v2h-2zM216 320h2v2h-2zM219 320h2v2h-2zM216 323h2v2h-2zM219 323h2v2h-2zM219 326h2v2h-2zM222 326h2v2h-2zM219 329h2v2h-2zM222 329h2v2h-2zM225 329h2v2h-2zM222 332h2v2h-2zM225 332h2v2h-2zM228 332h2v2h-2zM222 335h2v2h-2zM225 335h2v2h-2zM228 335h2v2h-2zM225 338h2v2h-2zM228 338h2v2h-2zM225 341h2v2h-2zM228 341h2v2h-2zM225 344h2v2h-2zM228 344h2v2h-2zM225 347h2v2h-2z" fill="#c8c8c8"/><path d="M212 390h2v2h-2zM215 390h2v2h-2zM212 393h2v2h-2zM215 393h2v2h-2zM212 396h2v2h-2zM215 396h2v2h-2zM212 399h2v2h-2zM212 402h2v2h-2zM215 402h2v2h-2zM212 405h2v2h-2zM215 405h2v2h-2zM212 408h2v2h-2zM212 411h2v2h-2zM215 411h2v2h-2zM212 414h2v2h-2zM215 414h2v2h-2zM212 417h2v2h-2zM215 417h2v2h-2zM212 420h2v2h-2zM215 420h2v2h-2zM212 423h2v2h-2zM215 423h2v2h-2zM218 423h2v2h-2zM221 423h2v2h-2zM224 423h2v2h-2zM215 426h2v2h-2zM218 426h2v2h-2zM221 426h2v2h-2zM224 426h2v2h-2zM212 429h2v2h-2zM215 429h2v2h-2zM218 429h2v2h-2zM221 429h2v2h-2zM224 429h2v2h-2zM212 432h2v2h-2zM215 432h2v2h-2zM218 432h2v2h-2zM221 432h2v2h-2zM218 435h2v2h-2zM221 435h2v2h-2zM221 438h2v2h-2z" fill="#c8c8c8"/><path d="M209 497h2v2h-2zM212 497h2v2h-2zM209 500h2v2h-2zM209 503h2v2h-2zM212 503h2v2h-2zM209 506h2v2h-2zM212 506h2v2h-2zM209 509h2v2h-2zM209 512h2v2h-2zM212 512h2v2h-2zM209 515h2v2h-2zM212 515h2v2h-2zM209 518h2v2h-2zM212 518h2v2h-2zM215 518h2v2h-2zM209 521h2v2h-2zM212 521h2v2h-2zM215 521h2v2h-2zM209 524h2v2h-2zM212 524h2v2h-2zM215 524h2v2h-2zM218 524h2v2h-2zM209 527h2v2h-2zM212 527h2v2h-2zM215 527h2v2h-2zM218 527h2v2h-2zM209 530h2v2h-2zM212 530h2v2h-2zM215 530h2v2h-2zM218 530h2v2h-2zM221 530h2v2h-2zM209 533h2v2h-2zM212 533h2v2h-2zM215 533h2v2h-2zM218 533h2v2h-2zM209 536h2v2h-2zM212 536h2v2h-2zM215 536h2v2h-2zM218 536h2v2h-2zM209 539h2v2h-2zM212 539h2v2h-2zM215 539h2v2h-2zM209 542h2v2h-2zM212 542h2v2h-2zM215 542h2v2h-2zM209 545h2v2h-2zM212 545h2v2h-2zM209 548h2v2h-2zM212 548h2v2h-2zM209 551h2v2h-2z" fill="#c8c8c8"/><path d="M208 727h2v2h-2zM211 727h2v2h-2zM208 730h2v2h-2zM211 730h2v2h-2zM208 733h2v2h-2zM211 733h2v2h-2zM214 733h2v2h-2zM208 736h2v2h-2zM211 736h2v2h-2zM214 736h2v2h-2zM208 739h2v2h-2zM211 739h2v2h-2zM214 739h2v2h-2zM208 742h2v2h-2zM211 742h2v2h-2zM214 742h2v2h-2zM217 742h2v2h-2zM208 745h2v2h-2zM211 745h2v2h-2zM214 745h2v2h-2zM217 745h2v2h-2zM208 748h2v2h-2zM211 748h2v2h-2zM214 748h2v2h-2zM217 748h2v2h-2zM220 748h2v2h-2zM208 751h2v2h-2zM211 751h2v2h-2zM214 751h2v2h-2zM217 751h2v2h-2zM220 751h2v2h-2zM223 751h2v2h-2zM208 754h2v2h-2zM211 754h2v2h-2zM214 754h2v2h-2zM217 754h2v2h-2zM220 754h2v2h-2zM223 754h2v2h-2zM208 757h2v2h-2zM211 757h2v2h-2zM214 757h2v2h-2zM217 757h2v2h-2zM220 757h2v2h-2z" fill="#c8c8c8"/>
  <!-- right border decor -->
  <rect x="1098" y="103" width="4" height="660" fill="#9da1a3"/>
  <rect x="1102" y="103" width="1" height="660" fill="#1a1e20"/>
  <rect x="1103" y="110" width="1" height="640" fill="#8a8e90"/>
  <rect x="1105" y="103" width="1" height="660" fill="#4a4e50"/>
  <g fill="#06374c">
    <rect x="1098" y="112" width="3" height="14"/><rect x="1098" y="133" width="2" height="36"/><rect x="1098" y="215" width="3" height="30"/><rect x="1098" y="283" width="2" height="40"/><rect x="1098" y="350" width="3" height="55"/><rect x="1098" y="440" width="2" height="30"/><rect x="1098" y="520" width="3" height="38"/><rect x="1098" y="600" width="2" height="48"/><rect x="1098" y="690" width="3" height="40"/>
  </g>
  <g fill="#5a5e60"><rect x="1103" y="152" width="3" height="22"/><rect x="1103" y="440" width="3" height="28"/><rect x="1103" y="560" width="3" height="26"/><rect x="1102" y="640" width="3" height="30"/></g>
  <!-- bottom edge -->
  <rect x="208" y="761" width="896" height="1" fill="#8a8e90"/>
  <rect x="206" y="762" width="900" height="1" fill="#c4c6c8"/>
  <path d="M212 764h6v1h-6zM222 764h10v1h-10zM236 764h14v1h-14zM252 764h14v1h-14zM268 764h22v1h-22zM292 764h14v1h-14zM308 764h6v1h-6zM316 764h22v1h-22zM344 764h80v1h-80zM430 764h60v1h-60zM492 764h10v1h-10zM504 764h6v1h-6zM514 764h46v1h-46zM562 764h22v1h-22zM587 764h60v1h-60zM650 764h22v1h-22zM674 764h22v1h-22zM700 764h6v1h-6zM708 764h14v1h-14zM725 764h14v1h-14zM741 764h14v1h-14zM759 764h6v1h-6zM767 764h80v1h-80zM849 764h22v1h-22zM875 764h46v1h-46zM923 764h46v1h-46zM971 764h80v1h-80zM1053 764h30v1h-30zM1086 764h14v1h-14z" fill="#9a9ea0"/>

  <!-- inner panel -->
  <rect x="271" y="140" width="779" height="622" fill="#022e40"/>
  <rect x="271" y="140" width="1" height="622" fill="#6c8088"/>
  <rect x="272" y="140" width="2" height="622" fill="#0a3a4e"/>
  <rect x="1045" y="146" width="1" height="616" fill="#5f6f76"/>
  <rect x="1049" y="141" width="1" height="621" fill="#6c7c82"/>
  <rect x="1045" y="228" width="1" height="3" fill="#022e40"/><rect x="1045" y="300" width="1" height="2" fill="#022e40"/><rect x="1045" y="418" width="1" height="12" fill="#022e40"/><rect x="1045" y="520" width="1" height="16" fill="#022e40"/>
  <rect x="271" y="139" width="779" height="1" fill="#e4e6e8"/>
  <path d="M273 141h80v1h-80zM359 141h80v1h-80zM443 141h22v1h-22zM467 141h80v1h-80zM553 141h14v1h-14zM569 141h80v1h-80zM652 141h14v1h-14zM668 141h6v1h-6zM680 141h60v1h-60zM744 141h14v1h-14zM764 141h6v1h-6zM776 141h10v1h-10zM788 141h6v1h-6zM796 141h22v1h-22zM824 141h6v1h-6zM834 141h46v1h-46zM884 141h22v1h-22zM912 141h22v1h-22zM937 141h80v1h-80zM1019 141h10v1h-10zM1033 141h17v1h-17z" fill="#9aa0a4"/>
  <!-- heading tab -->
  <path d="M532 139l6-5h20l6 5z" fill="#8c9094"/>

  <!-- separator band 1 -->
  <rect x="275" y="240" width="770" height="10" fill="url(#bandg)"/>
  <rect x="275" y="240" width="770" height="10" fill="url(#band)" opacity=".5"/>
  <path d="M276 252h14v1h-14zM294 252h60v1h-60zM357 252h80v1h-80zM439 252h80v1h-80zM525 252h14v1h-14zM545 252h22v1h-22zM569 252h6v1h-6zM578 252h60v1h-60zM640 252h14v1h-14zM656 252h22v1h-22zM680 252h60v1h-60zM744 252h80v1h-80zM826 252h46v1h-46zM878 252h80v1h-80zM960 252h46v1h-46zM1008 252h14v1h-14zM1024 252h10v1h-10zM1036 252h9v1h-9z" fill="#a4a8aa"/>
  <rect x="275" y="254" width="771" height="1" fill="#c8ccd0"/>
  <!-- table header band -->
  <rect x="345" y="579" width="67" height="11" fill="url(#bandg)"/><rect x="345" y="579" width="67" height="11" fill="url(#band)" opacity=".55"/><path d="M345 591h60v1h-60zM407 591h5v1h-5z" fill="#a4a8aa"/><rect x="345" y="593" width="67" height="1" fill="#d0d4d6"/><rect x="413" y="579" width="59" height="11" fill="url(#bandg)"/><rect x="413" y="579" width="59" height="11" fill="url(#band)" opacity=".55"/><path d="M413 591h6v1h-6zM421 591h14v1h-14zM441 591h14v1h-14zM459 591h13v1h-13z" fill="#a4a8aa"/><rect x="413" y="593" width="59" height="1" fill="#d0d4d6"/><rect x="473" y="579" width="140" height="11" fill="url(#bandg)"/><rect x="473" y="579" width="140" height="11" fill="url(#band)" opacity=".55"/><path d="M473 591h30v1h-30zM505 591h10v1h-10zM519 591h80v1h-80zM601 591h10v1h-10z" fill="#a4a8aa"/><rect x="473" y="593" width="140" height="1" fill="#d0d4d6"/><rect x="614" y="579" width="128" height="11" fill="url(#bandg)"/><rect x="614" y="579" width="128" height="11" fill="url(#band)" opacity=".55"/><path d="M614 591h10v1h-10zM626 591h46v1h-46zM674 591h30v1h-30zM708 591h10v1h-10zM724 591h6v1h-6zM732 591h10v1h-10z" fill="#a4a8aa"/><rect x="614" y="593" width="128" height="1" fill="#d0d4d6"/><rect x="743" y="579" width="77" height="11" fill="url(#bandg)"/><rect x="743" y="579" width="77" height="11" fill="url(#band)" opacity=".55"/><path d="M743 591h6v1h-6zM753 591h46v1h-46zM801 591h19v1h-19z" fill="#a4a8aa"/><rect x="743" y="593" width="77" height="1" fill="#d0d4d6"/><rect x="821" y="579" width="128" height="11" fill="url(#bandg)"/><rect x="821" y="579" width="128" height="11" fill="url(#band)" opacity=".55"/><path d="M821 591h46v1h-46zM870 591h60v1h-60zM932 591h14v1h-14zM948 591h1v1h-1z" fill="#a4a8aa"/><rect x="821" y="593" width="128" height="1" fill="#d0d4d6"/><rect x="950" y="579" width="24" height="11" fill="url(#bandg)"/><rect x="950" y="579" width="24" height="11" fill="url(#band)" opacity=".55"/><path d="M950 591h24v1h-24z" fill="#a4a8aa"/><rect x="950" y="593" width="24" height="1" fill="#d0d4d6"/>
  <!-- separator band 2 -->
  <rect x="275" y="522" width="770" height="10" fill="url(#bandg)"/>
  <rect x="275" y="522" width="770" height="10" fill="url(#band)" opacity=".5"/>
  <path d="M276 534h14v1h-14zM292 534h6v1h-6zM304 534h80v1h-80zM386 534h10v1h-10zM399 534h10v1h-10zM411 534h30v1h-30zM443 534h46v1h-46zM495 534h14v1h-14zM515 534h60v1h-60zM577 534h6v1h-6zM589 534h30v1h-30zM622 534h60v1h-60zM684 534h14v1h-14zM700 534h6v1h-6zM709 534h46v1h-46zM758 534h14v1h-14zM776 534h30v1h-30zM812 534h14v1h-14zM829 534h30v1h-30zM861 534h60v1h-60zM923 534h46v1h-46zM975 534h6v1h-6zM985 534h30v1h-30zM1021 534h24v1h-24z" fill="#a4a8aa"/>
  <rect x="275" y="536" width="771" height="1" fill="#c8ccd0"/>
</g>


<g id="bottombar">
  <path d="M209 788H1028V824H234L209 803z" fill="url(#grid)"/>
  <path d="M209 788H1028V824H234L209 803z" fill="#001018" opacity=".38"/>
  <path d="M209 788V803L234 823.500" stroke="#8a8e90" stroke-width="2" fill="none"/>
  <rect x="209" y="786.500" width="821" height="1" fill="#6c7072"/>
  <rect x="209" y="787" width="821" height="1" fill="#50585c"/>
  <path d="M234 824h10v1h-10zM246 824h30v1h-30zM278 824h22v1h-22zM302 824h10v1h-10zM318 824h10v1h-10zM334 824h60v1h-60zM396 824h6v1h-6zM404 824h22v1h-22zM428 824h6v1h-6zM440 824h22v1h-22zM468 824h60v1h-60zM530 824h80v1h-80zM616 824h30v1h-30zM648 824h14v1h-14zM666 824h46v1h-46zM715 824h14v1h-14zM731 824h46v1h-46zM779 824h10v1h-10zM793 824h10v1h-10zM806 824h46v1h-46zM858 824h30v1h-30zM890 824h80v1h-80zM976 824h10v1h-10zM990 824h10v1h-10zM1006 824h24v1h-24z" fill="#7a7e80"/>
  <rect x="209" y="786" width="16" height="3" fill="#b4b6b8"/>
  <rect x="330" y="783" width="16" height="2" fill="#3c4042"/><rect x="455" y="783" width="20" height="2" fill="#3c4042"/><rect x="575" y="783" width="12" height="2" fill="#3c4042"/><rect x="830" y="785" width="18" height="2" fill="#4c5052"/><rect x="938" y="784" width="16" height="2" fill="#4c5052"/>
  <rect x="352" y="825" width="12" height="2" fill="#3c4042"/><rect x="560" y="826" width="26" height="2" fill="#3c4042"/><rect x="640" y="826" width="14" height="3" fill="#5c6062"/><rect x="850" y="826" width="30" height="2" fill="#4c5052"/>
  <path d="M212.0 795.0h1.5v1.5h-1.5zM212.0 797.5h1.5v1.5h-1.5zM214.5 797.5h1.5v1.5h-1.5zM214.5 800.0h1.5v1.5h-1.5zM217.0 800.0h1.5v1.5h-1.5zM214.5 802.5h1.5v1.5h-1.5zM217.0 802.5h1.5v1.5h-1.5zM219.5 802.5h1.5v1.5h-1.5zM217.0 805.0h1.5v1.5h-1.5zM219.5 805.0h1.5v1.5h-1.5zM222.0 805.0h1.5v1.5h-1.5zM219.5 807.5h1.5v1.5h-1.5zM222.0 807.5h1.5v1.5h-1.5zM224.5 807.5h1.5v1.5h-1.5zM222.0 810.0h1.5v1.5h-1.5zM224.5 810.0h1.5v1.5h-1.5zM227.0 810.0h1.5v1.5h-1.5zM224.5 812.5h1.5v1.5h-1.5zM227.0 812.5h1.5v1.5h-1.5zM229.5 812.5h1.5v1.5h-1.5zM232.0 812.5h1.5v1.5h-1.5zM234.5 812.5h1.5v1.5h-1.5zM237.0 812.5h1.5v1.5h-1.5zM239.5 812.5h1.5v1.5h-1.5zM242.0 812.5h1.5v1.5h-1.5zM227.0 815.0h1.5v1.5h-1.5zM229.5 815.0h1.5v1.5h-1.5zM232.0 815.0h1.5v1.5h-1.5zM234.5 815.0h1.5v1.5h-1.5zM237.0 815.0h1.5v1.5h-1.5zM239.5 815.0h1.5v1.5h-1.5zM242.0 815.0h1.5v1.5h-1.5z" fill="#c8c8c8"/>
  <!-- right end pieces -->
  <rect x="1008" y="788" width="1" height="36" fill="#9aa0a4"/><rect x="1021" y="788" width="1" height="36" fill="#7c8488"/>
  <!-- logout box -->
  <path d="M1028 787H1108V812L1098 822H1028z" fill="url(#grid)"/>
  <path d="M1028 787H1108V812L1098 822H1028z" fill="none" stroke="#9a9ea0" stroke-width="1.6"/>
  <path d="M1026 790v24l4 8" stroke="#b4b6b8" stroke-width="2" fill="none"/>
  <path d="M1033 808h48" stroke="#b4b6b8" stroke-width="1"/>
  <path d="M1100 822l8-9v9z" fill="#b4b6b8"/>
  <path d="M1032 813h2v2h-2zM1035 813h2v2h-2zM1038 813h2v2h-2zM1041 813h2v2h-2zM1032 816h2v2h-2zM1035 816h2v2h-2zM1038 816h2v2h-2zM1041 816h2v2h-2zM1044 816h2v2h-2zM1047 816h2v2h-2zM1032 819h2v2h-2zM1035 819h2v2h-2zM1038 819h2v2h-2zM1041 819h2v2h-2zM1047 819h2v2h-2zM1050 819h2v2h-2zM1053 819h2v2h-2zM1056 819h2v2h-2z" fill="#c8c8c8"/>
  <path d="M1084 809l14 13M1098 809l-14 13" stroke="#d8202c" stroke-width="3" fill="none"/>
</g>


<g id="scroll">
  <rect x="1134" y="104" width="15" height="14" fill="#264e5a"/><path d="M1134.500 118V104.5H1149" stroke="#3c4448" stroke-width="1" fill="none"/><path d="M1135.500 117V105.5H1148" stroke="#7ea2cc" stroke-width="1" fill="none"/><path d="M1134 117.5H1148.500V104" stroke="#1a2e36" stroke-width="1" fill="none"/><path d="M1138 114l4-5 4 5z" fill="#fff"/>
  <rect x="1134" y="286" width="15" height="337" fill="#264e5a"/><path d="M1134.500 623V286.500H1149" stroke="#3c4448" stroke-width="1" fill="none"/><path d="M1135.500 622V287.500H1148" stroke="#7ea2cc" stroke-width="1" fill="none"/><path d="M1134 622.500H1148.500V286" stroke="#1a2e36" stroke-width="1" fill="none"/>
  <rect x="1134" y="747" width="15" height="14" fill="#264e5a"/><path d="M1134.500 761V747.5H1149" stroke="#3c4448" stroke-width="1" fill="none"/><path d="M1135.500 760V748.5H1148" stroke="#7ea2cc" stroke-width="1" fill="none"/><path d="M1134 760.5H1148.500V747" stroke="#1a2e36" stroke-width="1" fill="none"/><path d="M1138 751l4 5 4-5z" fill="#fff"/>
</g>

</svg>
<div class="abs" style="left:0;top:0;width:1106px;height:761px;overflow:hidden">

<svg id="banner" style="left:361px;top:263px" width="598" height="250" viewBox="0 0 598 250">
  <defs>
    <linearGradient id="bbg" x1="0" x2="1" y1="0" y2="0">
      <stop offset="0" stop-color="#f8f2e3"/><stop offset=".25" stop-color="#fdfaf0"/><stop offset=".42" stop-color="#fbf5e4"/><stop offset=".55" stop-color="#f6ecd0"/><stop offset=".7" stop-color="#fbf8ea"/><stop offset=".85" stop-color="#fefdf8"/><stop offset="1" stop-color="#f2f1ec"/>
    </linearGradient>
    <linearGradient id="bfloor" x1="0" x2="1" y1="0" y2="0">
      <stop offset="0" stop-color="#f4ecd8"/><stop offset=".4" stop-color="#f0e4c0"/><stop offset=".65" stop-color="#e2d29c"/><stop offset="1" stop-color="#dccf9e"/>
    </linearGradient>
    <linearGradient id="box3g" x1="0" x2="1" y1="0" y2="0"><stop offset="0" stop-color="#fbf5e6"/><stop offset=".72" stop-color="#f3e9d2"/><stop offset=".88" stop-color="#bfb090"/><stop offset="1" stop-color="#8c7c5c"/></linearGradient>
    <linearGradient id="box4g" x1="0" x2="1" y1="0" y2="1"><stop offset="0" stop-color="#8a7650"/><stop offset=".45" stop-color="#b09a6c"/><stop offset="1" stop-color="#e2d4ac"/></linearGradient>
    <linearGradient id="box6g" x1="0" x2="0" y1="0" y2="1"><stop offset="0" stop-color="#b49a6c"/><stop offset=".55" stop-color="#a48c62"/><stop offset="1" stop-color="#d4c094"/></linearGradient>
    <linearGradient id="box7g" x1="0" x2="0" y1="0" y2="1"><stop offset="0" stop-color="#ad976a"/><stop offset=".6" stop-color="#97835a"/><stop offset="1" stop-color="#c6b387"/></linearGradient>
    <filter id="bl2" x="-20%" y="-20%" width="140%" height="140%"><feGaussianBlur stdDeviation="2"/></filter>
    <filter id="bl5" x="-20%" y="-20%" width="140%" height="140%"><feGaussianBlur stdDeviation="5"/></filter>
    <filter id="bl1" x="-10%" y="-10%" width="120%" height="120%"><feGaussianBlur stdDeviation=".8"/></filter>
    <clipPath id="bclip"><rect x="0" y="0" width="598" height="250"/></clipPath>
  </defs>
  <g clip-path="url(#bclip)">
    <rect width="598" height="250" fill="url(#bbg)"/>
    <!-- floor -->
    <path d="M0 204L598 196V250H0z" fill="url(#bfloor)"/>
    <!-- big tan shadow robot (blurred) -->
    <g filter="url(#bl5)">
      <path d="M250 0H356L408 62L418 96L428 116L414 130L384 96H352L330 70L256 40z" fill="#cfae68"/>
      <path d="M352 96h34l10 60h-30l-14-20z" fill="#dcc48a" opacity=".9"/>
      <path d="M170 20L256 36L330 74L300 100L200 70z" fill="#efe2be" opacity=".9"/>
      <path d="M300 100l60 30v30l-70-20z" fill="#ecdcb0" opacity=".8"/>
    </g>
    <g filter="url(#bl2)" opacity=".8">
      <path d="M360 66l16-4 8 8-16 6zM372 80l14-4 8 8-14 6zM382 94l12-4 8 8-12 6z" fill="#b08e4c"/>
      <path d="M336 62l10-8 40 50-8 6z" fill="#b99652" opacity=".6"/>
    </g>
    <!-- ghost robot right -->
    <g filter="url(#bl2)">
      <path d="M520 26H598V172L566 168L540 140L528 96L520 70z" fill="#e9e8e3"/>
      <path d="M536 56l52-4v10l-50 4z" fill="#cfcec8"/>
      <ellipse cx="517" cy="80" rx="14" ry="30" fill="#e0dfd9"/>
      <path d="M590 40q10 60 0 120" stroke="#fbfbf8" stroke-width="6" fill="none"/>
      <path d="M566 120l30 50M578 130l20 50" stroke="#d4d2ca" stroke-width="2" fill="none"/>
    </g>
    <!-- faint left boxes -->
    <g filter="url(#bl2)">
      <rect x="-6" y="137" width="57" height="64" rx="9" fill="#f1e6cc" opacity=".75"/>
      <rect x="33" y="164" width="54" height="40" rx="9" fill="#ede0c4" opacity=".95"/>
      <path d="M0 205h90v6H0z" fill="#eadcbc" opacity=".7"/>
    </g>
    <!-- seats row -->
    <g filter="url(#bl1)">
      <g fill="#e9e1cd">
        <path d="M203 85h24l-4 34h-20z"/><path d="M244 96h20l-3 26h-17z"/><path d="M282 103h18l-3 22h-15z"/><path d="M314 110h15l-2 18h-13z"/><path d="M342 116h12l-2 15h-10z"/>
      </g>
      <g fill="#9c947e">
        <path d="M227 85l6-3-8 38h-3z"/><path d="M264 96l5-3-6 30h-3z"/><path d="M300 103l4-2-5 25h-3z"/><path d="M329 110l4-2-4 21h-3z"/>
      </g>
      <path d="M175 124l40-3 38 4-21 18h-45z" fill="#ddd6c2"/>
      <path d="M175 125l12 18h45l21-18-24 10h-40z" fill="#aaa28c"/>
      <path d="M253 126l30-4 24 4-16 14h-26z" fill="#d8d0bc"/><path d="M253 127l12 13h26l16-14-18 8h-24z" fill="#b0a892"/>
      <path d="M145 152l29-28 3 3-26 28zM253 128l-16 12 3 3z" fill="#7c7462"/>
      <path d="M199 143h24l-3 18h-18z" fill="#cdc5ae"/><path d="M203 148h16v2h-16zM204 153h14v2h-14z" fill="#a8a08a"/>
      <g fill="#d2cab2"><rect x="400" y="139" width="9" height="14"/><rect x="418" y="141" width="9" height="13"/><rect x="436" y="143" width="8" height="12"/><rect x="452" y="145" width="8" height="11"/></g>
      <g fill="#a69e88"><path d="M409 139l3-2-3 16h-2zM427 141l3-2-3 15h-2zM444 143l3-2-3 14h-2z"/></g>
    </g>
    <!-- boxes -->
    <g filter="url(#bl1)">
      <rect x="84" y="148" width="87" height="63" rx="11" fill="url(#box3g)"/>
      <!-- stairs -->
      <rect x="170" y="180" width="57" height="28" fill="#d8caa4"/>
      <path d="M170 181h57v3h-57zM170 187h57v3h-57zM170 193h57v3h-57zM170 199h57v3h-57zM170 204h57v3h-57z" fill="#6c5c3e"/>
      <rect x="227" y="146" width="84" height="66" rx="11" fill="url(#box4g)"/>
      <rect x="311" y="164" width="54" height="40" rx="9" fill="#cdb888"/>
      <rect x="345" y="138" width="101" height="62" rx="12" fill="url(#box6g)"/>
      <path d="M352 150q30-8 60 4t30 30l-80 6z" fill="#c4a87c" opacity=".45"/>
      <rect x="439" y="163" width="146" height="41" rx="10" fill="url(#box7g)"/>
      <path d="M470 176q50-10 110 2v20h-110z" fill="#85724c" opacity=".5"/>
    </g>
    <!-- floor shadows -->
    <g filter="url(#bl2)"><path d="M168 206h200v8h-200z" fill="#6a5838" opacity=".75"/><path d="M100 210h70v5h-70z" fill="#b8a888" opacity=".6"/><path d="M360 202h230v6h-230z" fill="#7a683f" opacity=".55"/></g>
    <!-- floor cables -->
    <g fill="none" stroke="#4e4228" stroke-width="1.1" opacity=".85"><path d="M392 207q40-8 90 2t116-2"/><path d="M300 224q120-14 298 -8"/><path d="M598 206l-40 6"/></g>
    <!-- robot -->
    <g>
      <path d="M407 47.700L416 49L438.600 85L438 91L423.500 99L408.500 90z" fill="#8d846e"/>
      <path d="M407 47.700L416 49L420 92L408.500 90z" fill="#a39a83"/>
      <path d="M422 95l40 13-1 7-41-13z" fill="#b4ab93"/>
      <path d="M461 106.400L474.700 102.800L517 114L545.500 121.500L547 127.500L526 136.600L505 138L477.700 132L462.700 118.500z" fill="#8f856c"/>
      <path d="M461 106.400L474.700 102.800L517 114L545.500 121.500L520 124L476 116z" fill="#aaa087"/>
      <path d="M495.800 85.400L526 83.900L523 103.400L517 111L498.800 106.400z" fill="#d2d1c8"/>
      <path d="M498.800 100l24-2-1 6-5 7-18-4.600z" fill="#6b6350"/>
      <path d="M500 90h22v1.500h-22z" fill="#b5b3a8"/>
      <path d="M501.800 136.600H526V157.700L514 162L505 157.700z" fill="#7c725c"/>
      <path d="M545.500 122l5-1 11 26-5 3z" fill="#8d846e"/>
      <path d="M553 145.600L565 142.600L590.700 165L583 169.700z" fill="#c6c2b4"/>
      <path d="M497 157l4 1-9 25-4-1zM527 158l4-2 16 25-4 2z" fill="#dddcd4"/>
      <path d="M483.800 181.700H495.800L503 250H468z" fill="#cfc39b"/>
      <path d="M495.800 181.700L503 250h-8l-4-66z" fill="#a2946c"/>
      <path d="M538 181L553 180L588 250H534z" fill="#d2c69e"/>
      <path d="M553 180l35 70h-9l-30-68z" fill="#a2946c"/>
    </g>
    <!-- bars -->
    <rect x="0" y="0" width="598" height="25" fill="#272626" opacity=".75"/>
    <rect x="0" y="225" width="598" height="25" fill="#222120" opacity=".78"/>
    <!-- tiny figure icon -->
    <g fill="#bdbdb8"><circle cx="405" cy="231" r="1.600"/><path d="M401 227l2 3.500 3.500 1.500 2 5.500-1 8.500h-1.500l-.5-6.500-1 .5-1.500 6h-1.500l1-9.500-1.500-4z"/></g>
  </g>
</svg>
<div class="abs" style="left:391px;top:269px;font-size:11.700px;line-height:15px;color:#fff;white-space:nowrap;">mYsterious.team.14</div>
<div class="abs" style="left:776px;top:492px;font-size:12.5px;line-height:15px;color:#fff;white-space:nowrap;">better :: stronger :: faster</div>


<div class="abs" style="left:278px;top:126.500px;font-weight:bold;font-size:12px;line-height:15px;color:#fff;white-space:nowrap;letter-spacing:-.22px">[ MT ] <span class="bl">●</span> better :: stronger :: faster <span class="bl">●</span></div>
<div class="il" style="top:146px">Allianzangehörigkeit:</div><div class="iv" style="top:146px">mYsterious Team - #mT.gn</div>
<div class="il" style="top:166px">Verbündet mit:</div><div class="iv" style="top:166px"><b>Mitglied der Meta</b> praetorian</div>
<div class="il" style="top:186px">Nicht-Angriffs-Pakt mit:</div><div class="iv" style="top:186px">AlklawZ | [eXS] | va`lar</div>
<div class="il" style="top:206px">Im Krieg mit:</div><div class="iv" style="top:206px">mozi -.-</div>
<div class="abs" style="left:345px;top:552px;width:630px;height:26px;background:#123745;box-sizing:border-box;border-right:1px solid #6c7c82"></div>
<div class="th l" style="left:345px;top:580px;width:67px">ID</div>
<div class="th l" style="left:413px;top:580px;width:59px;padding-left:2px">Rang</div>
<div class="th l" style="left:473px;top:580px;width:140px;padding-left:2px">Nick</div>
<div class="th r" style="left:614px;top:580px;width:128px">Punkte</div>
<div class="th r" style="left:743px;top:580px;width:77px">Größe</div>
<div class="th c" style="left:821px;top:580px;width:128px">Scans</div>
<div class="th l" style="left:950px;top:580px;width:24px"></div>
<div class="td l idc" style="left:345px;top:595px;width:67px">14:1</div>
<div class="td l alt" style="left:413px;top:595px;width:59px;padding-left:2px">468</div>
<div class="td l w" style="left:473px;top:595px;width:140px;padding-left:2px">backi</div>
<div class="td r alt" style="left:614px;top:595px;width:128px">9.298.884</div>
<div class="td r" style="left:743px;top:595px;width:77px;padding-right:1px">24</div>
<div class="td c alt w" style="left:821px;top:595px;width:128px">| S | G | N |</div>
<div class="td l alt w" style="left:950px;top:595px;width:24px">M</div>
<div class="td l idc" style="left:345px;top:613px;width:67px">14:2</div>
<div class="td l alt" style="left:413px;top:613px;width:59px;padding-left:2px">1851</div>
<div class="td l w" style="left:473px;top:613px;width:140px;padding-left:2px">Elton</div>
<div class="td r alt" style="left:614px;top:613px;width:128px">6.172.996</div>
<div class="td r" style="left:743px;top:613px;width:77px;padding-right:1px">13</div>
<div class="td c alt w" style="left:821px;top:613px;width:128px">| S | G | N |</div>
<div class="td l alt w" style="left:950px;top:613px;width:24px">M</div>
<div class="td l idc" style="left:345px;top:631px;width:67px">14:3</div>
<div class="td l alt" style="left:413px;top:631px;width:59px;padding-left:2px">3484</div>
<div class="td l w" style="left:473px;top:631px;width:140px;padding-left:2px">raiden</div>
<div class="td r alt" style="left:614px;top:631px;width:128px">3.499.358</div>
<div class="td r" style="left:743px;top:631px;width:77px;padding-right:1px">20</div>
<div class="td c alt w" style="left:821px;top:631px;width:128px">| S | G | N |</div>
<div class="td l alt w" style="left:950px;top:631px;width:24px">M</div>
<div class="td l idc" style="left:345px;top:649px;width:67px">14:5</div>
<div class="td l alt" style="left:413px;top:649px;width:59px;padding-left:2px">771</div>
<div class="td l w" style="left:473px;top:649px;width:140px;padding-left:2px">zept</div>
<div class="td r alt" style="left:614px;top:649px;width:128px">8.250.894</div>
<div class="td r" style="left:743px;top:649px;width:77px;padding-right:1px">16</div>
<div class="td c alt w" style="left:821px;top:649px;width:128px">| S | G | N |</div>
<div class="td l alt w" style="left:950px;top:649px;width:24px">M</div>
<div class="td l idc" style="left:345px;top:667px;width:67px">14:6</div>
<div class="td l alt" style="left:413px;top:667px;width:59px;padding-left:2px">3131</div>
<div class="td l w" style="left:473px;top:667px;width:140px;padding-left:2px">MiLKa</div>
<div class="td r alt" style="left:614px;top:667px;width:128px">4.080.144</div>
<div class="td r" style="left:743px;top:667px;width:77px;padding-right:1px">26</div>
<div class="td c alt w" style="left:821px;top:667px;width:128px">| S | G | N |</div>
<div class="td l alt w" style="left:950px;top:667px;width:24px">M</div>
<div class="td l idc" style="left:345px;top:685px;width:67px">14:7</div>
<div class="td l alt" style="left:413px;top:685px;width:59px;padding-left:2px">1370</div>
<div class="td l w" style="left:473px;top:685px;width:140px;padding-left:2px">Propain</div>
<div class="td r alt" style="left:614px;top:685px;width:128px">6.953.468</div>
<div class="td r" style="left:743px;top:685px;width:77px;padding-right:1px">20</div>
<div class="td c alt w" style="left:821px;top:685px;width:128px">| S | G | N |</div>
<div class="td l alt w" style="left:950px;top:685px;width:24px">M</div>
<div class="td l idc" style="left:345px;top:703px;width:67px"><span class="mec">14:</span>8</div>
<div class="td l alt me" style="left:413px;top:703px;width:59px;padding-left:2px">964</div>
<div class="td l w" style="left:473px;top:703px;width:140px;padding-left:2px">ZorN</div>
<div class="td r alt me" style="left:614px;top:703px;width:128px">7.727.298</div>
<div class="td r me" style="left:743px;top:703px;width:77px;padding-right:1px">30</div>
<div class="td c alt w" style="left:821px;top:703px;width:128px">| S | G | N |</div>
<div class="td l alt w" style="left:950px;top:703px;width:24px">M</div>
<div class="td l idc" style="left:345px;top:721px;width:67px">14:9</div>
<div class="td l alt" style="left:413px;top:721px;width:59px;padding-left:2px">4111</div>
<div class="td l w" style="left:473px;top:721px;width:140px;padding-left:2px">Dikar</div>
<div class="td r alt" style="left:614px;top:721px;width:128px">2.432.541</div>
<div class="td r" style="left:743px;top:721px;width:77px;padding-right:1px">20</div>
<div class="td c alt w" style="left:821px;top:721px;width:128px">| S | G | N |</div>
<div class="td l alt w" style="left:950px;top:721px;width:24px">M</div>
<div class="td l idc" style="left:345px;top:739px;width:67px">14:10</div>
<div class="td l alt" style="left:413px;top:739px;width:59px;padding-left:2px">2270</div>
<div class="td l w" style="left:473px;top:739px;width:140px;padding-left:2px">Weedmaster</div>
<div class="td r alt" style="left:614px;top:739px;width:128px">5.504.173</div>
<div class="td r" style="left:743px;top:739px;width:77px;padding-right:1px">12</div>
<div class="td c alt w" style="left:821px;top:739px;width:128px">| S | G | N |</div>
<div class="td l alt w" style="left:950px;top:739px;width:24px">M</div>
<div class="td l idc" style="left:345px;top:757px;width:67px">14:11</div>
<div class="td l alt" style="left:413px;top:757px;width:59px;padding-left:2px">3333</div>
<div class="td l w" style="left:473px;top:757px;width:140px;padding-left:2px">kaoz</div>
<div class="td r alt" style="left:614px;top:757px;width:128px">3.310.204</div>
<div class="td r" style="left:743px;top:757px;width:77px;padding-right:1px">18</div>
<div class="td c alt w" style="left:821px;top:757px;width:128px">| S | G | N |</div>
<div class="td l alt w" style="left:950px;top:757px;width:24px">M</div>

</div>

<div class="abs lg" style="left:72px;top:105px;transform:scale(1.42,1)">GALAXY</div>
<div class="abs lg" style="left:72px;top:120px;transform:scale(1.52,1)">NETWORK</div>

<div class="abs" style="left:38px;top:175px;font-weight:bold;font-size:12px;line-height:15px;color:#fff;">menu</div>
<div class="mc" style="left:40px;top:203px">allgemein</div>
<div class="mi" style="right:1008px;top:224px">Ranglisten</div>
<div class="mi" style="right:1008px;top:238px">Galaxieansicht</div>
<div class="mi" style="right:1008px;top:252px">Profil bearbeiten</div>
<div class="mc" style="left:44px;top:283px">allianz</div>
<div class="mi" style="right:1002px;top:303px">Mitglieder</div>
<div class="mi" style="right:1002px;top:317px">Diplomatie</div>
<div class="mi" style="right:1002px;top:331px">Wirtschaft</div>
<div class="mi" style="right:1002px;top:345px">Geschichte</div>
<div class="mi" style="right:1002px;top:359px">Board</div>
<div class="mc" style="left:43px;top:384px">galaxy</div>
<div class="mi" style="right:1002px;top:404px">Taktik</div>
<div class="mi" style="right:1002px;top:418px">Verwaltung</div>
<div class="mi" style="right:1002px;top:432px">Wirtschaft</div>
<div class="mi" style="right:1002px;top:446px">Board</div>
<div class="mc" style="left:42px;top:470px">planet</div>
<div class="mi" style="right:1002px;top:491px">Rohstoffe</div>
<div class="mi" style="right:1002px;top:505px">Schiffproduktion</div>
<div class="mi" style="right:1002px;top:519px">Verteidigung</div>
<div class="mi" style="right:1002px;top:533px">Kommunikation</div>
<div class="mi" style="right:1002px;top:547px">Forschung</div>
<div class="mi" style="right:1002px;top:561px">Konstruktion</div>
<div class="mi" style="right:1002px;top:575px">Aufklärung</div>
<div class="mi" style="right:1002px;top:589px">Flottenbewegung</div>

<div class="abs" style="left:244px;top:792px;font-weight:bold;font-size:12px;line-height:15px;color:#fff">quicklinks</div>
<div class="abs" style="left:317px;top:798px;font-size:9px;line-height:10px;color:#fff">+</div>
<div class="abs ql" style="left:330px;top:794px;">News | GN Lotto | Portal | Forum | Forschungsbaum |</div>
<div class="abs ql" style="left:330px;top:808px;">Kampfwerte | IRC Chat | Handbuch</div>
<div class="abs" style="left:1032px;top:790px;font-weight:bold;font-size:12.5px;line-height:15px;color:#dc2430;letter-spacing:-.5px">Ausloggen</div>

</div>
<div id="viewborder"></div><div id="viewtop"></div>

<!-- ======= STATUS BAR ======= -->
<div id="statusbar">
  <svg class="abs" style="left:2px;top:5px" width="16" height="16" viewBox="0 0 17 16">
    <path d="M4.500 .5h8l3 3v12h-11z" fill="#e8eeff" stroke="#7c8cc8" stroke-width=".8"/>
    <path d="M10.800 11.600A4.600 4.300 0 1 1 11.600 8.800H3.500" fill="none" stroke="#1f6fd6" stroke-width="2.100"/>
    <path d="M1 12.500c2-5.500 8-9.500 12-8.500" fill="none" stroke="#58a8f0" stroke-width="1.100"/>
  </svg>
  <span class="abs" style="left:21px;top:7px;line-height:14px">Fertig</span>
  <div class="spane" style="left:0;width:820px;border-left:0"></div>
  <div class="spane" style="left:822px;width:22px"></div>
  <div class="spane" style="left:846px;width:22px"></div>
  <div class="spane" style="left:870px;width:22px"></div>
  <div class="spane" style="left:894px;width:22px"></div>
  <div class="spane" style="left:918px;width:22px"></div>
  <div class="spane" style="left:942px;width:208px"></div>
  <svg class="abs" style="left:946px;top:7px" width="15" height="15" viewBox="0 0 15 15">
    <circle cx="7.500" cy="7.500" r="6.500" fill="#2858c8" stroke="#183880" stroke-width=".8"/>
    <path d="M3 4c2-2 4-1 5 0s-1 3-3 3-3-1-2-3zM8 8c2-1 4 0 4 2s-2 3-3 2-2-3-1-4z" fill="#38b838"/>
  </svg>
  <span class="abs" style="left:965px;top:7px;line-height:14px">Internet</span>
</div>

</body>
</html>
